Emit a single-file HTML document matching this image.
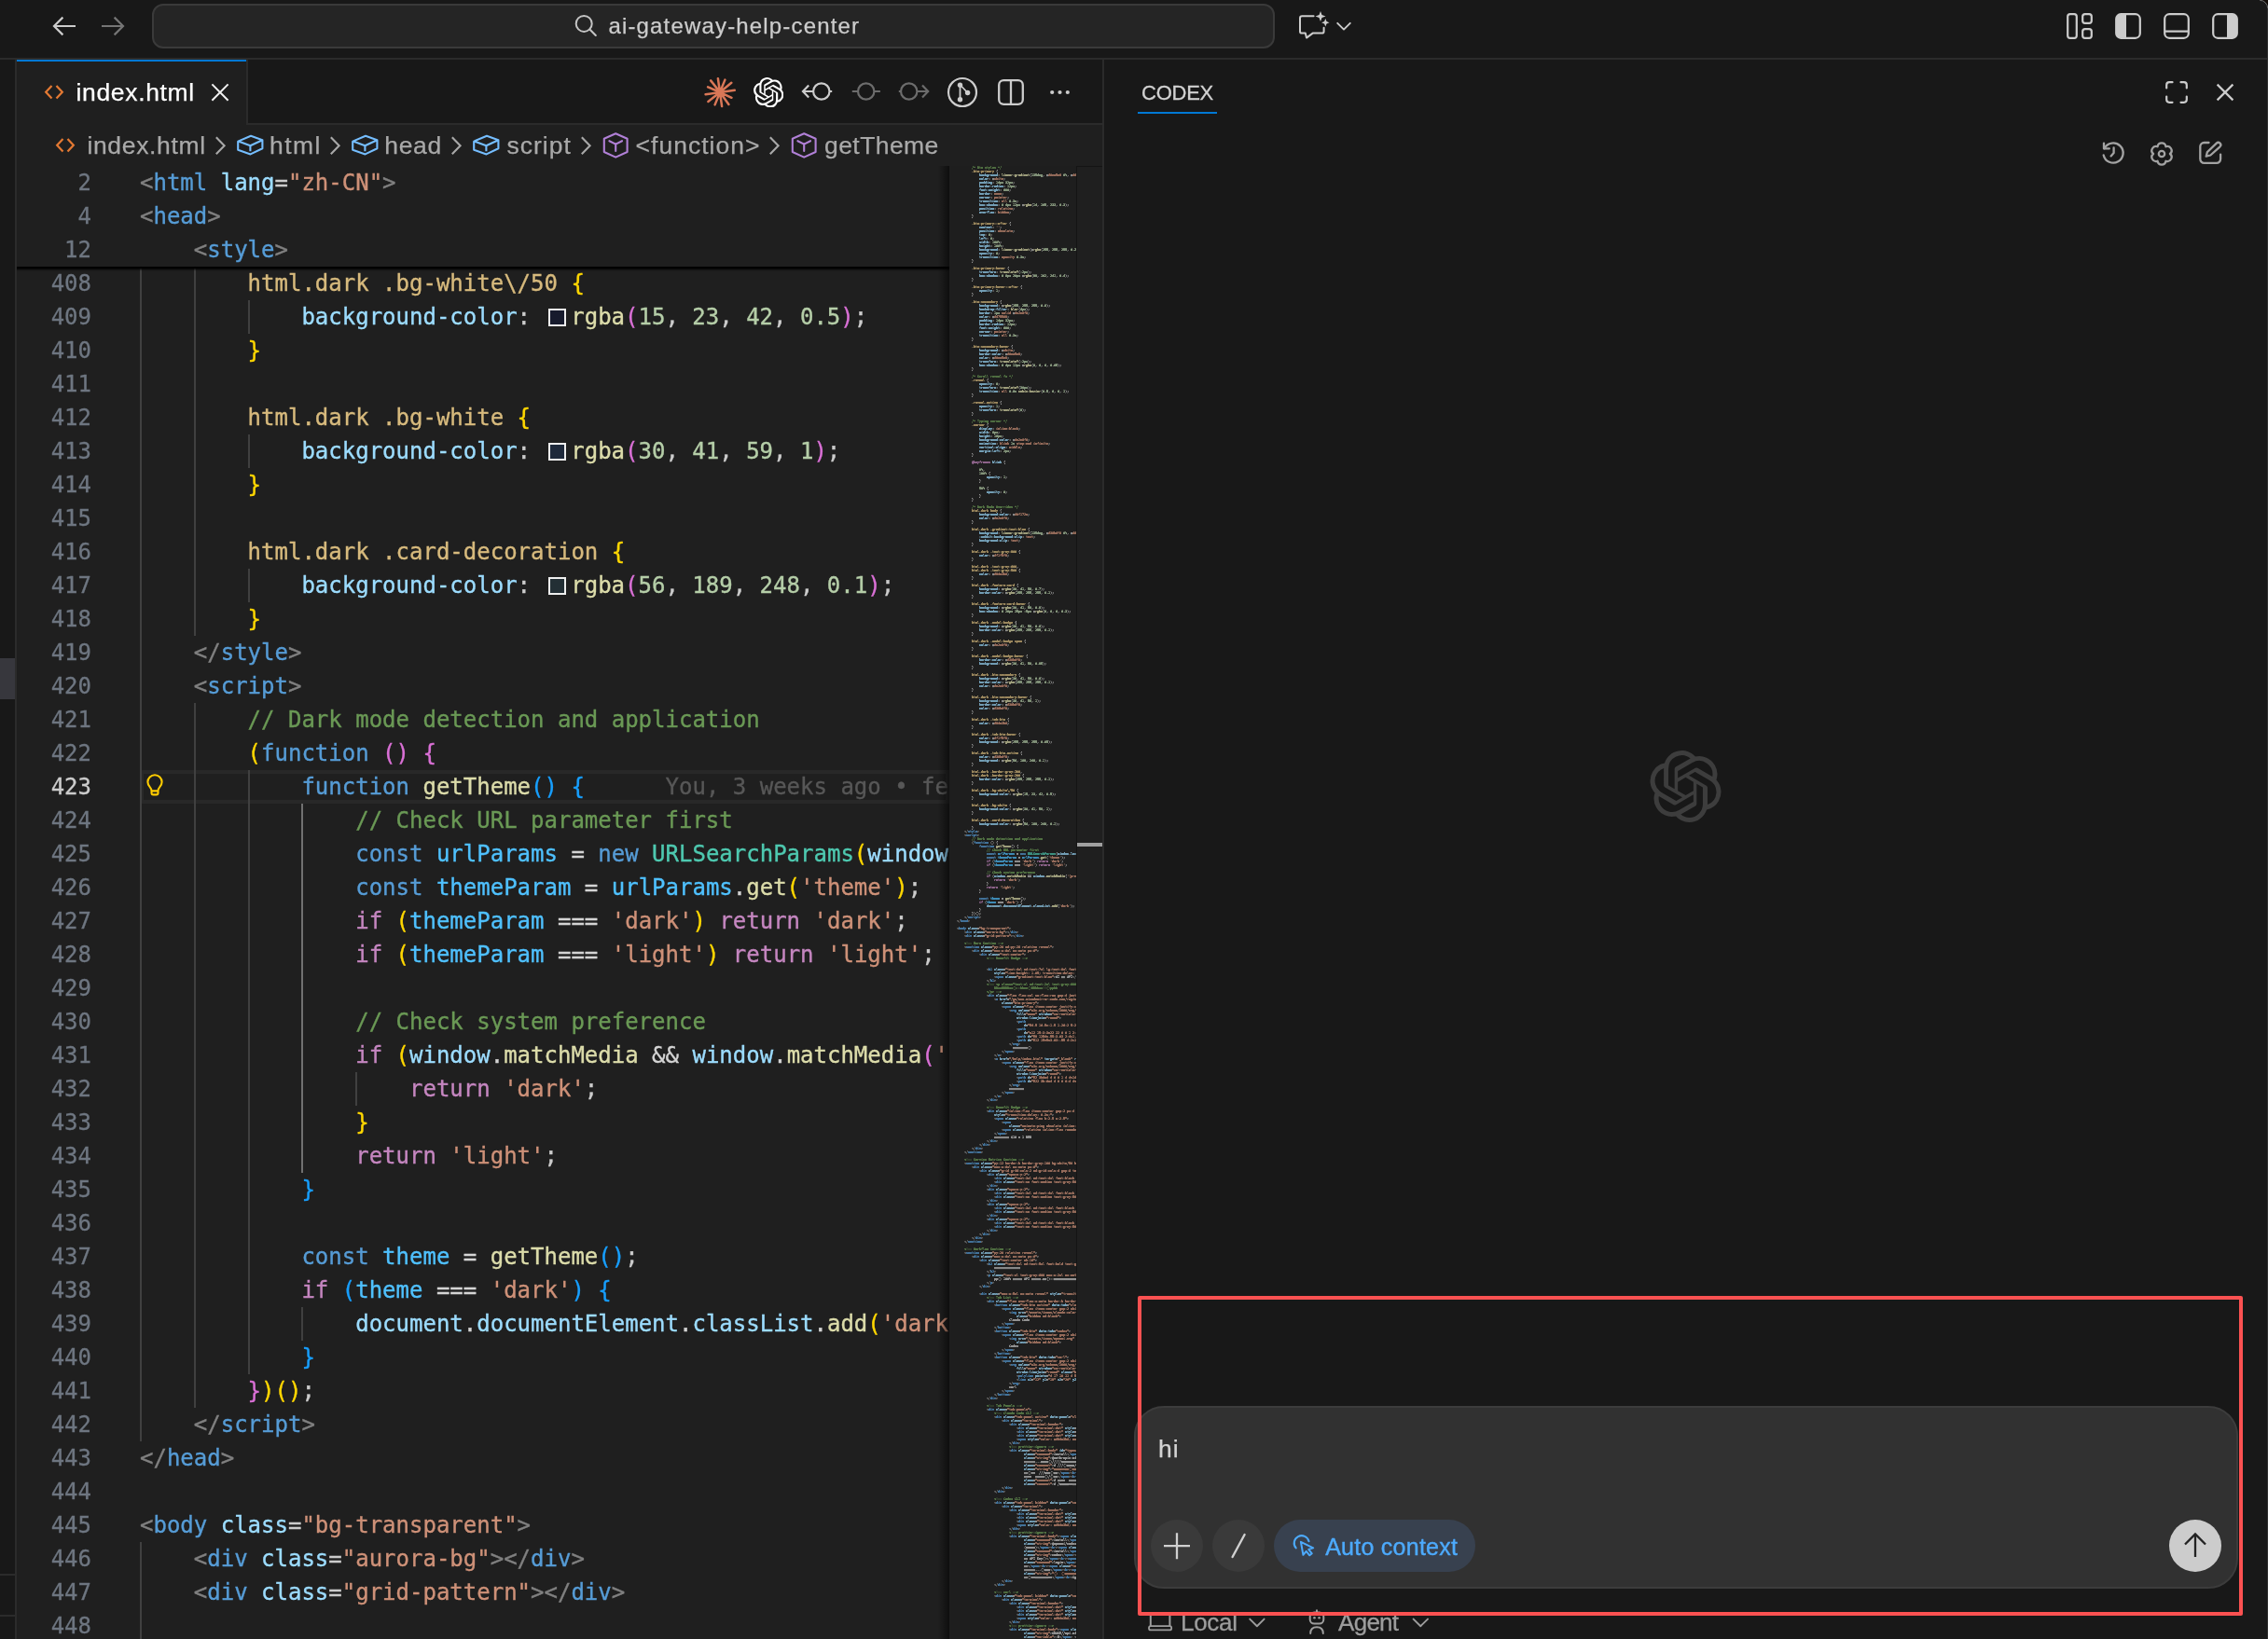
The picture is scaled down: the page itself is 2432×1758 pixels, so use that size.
<!DOCTYPE html>
<html lang="en"><head><meta charset="utf-8"><title>index.html — ai-gateway-help-center</title>
<style>
html,body{margin:0;padding:0;background:#181818;}
body{width:2432px;height:1758px;overflow:hidden;position:relative;font-family:"Liberation Sans",sans-serif;}
#root{left:0;top:0;width:2432px;height:1758px;will-change:transform;}
body div, body svg, body span.tx{position:absolute;}
.tx{white-space:pre;}
#ed .ln{left:0;width:80px;-webkit-text-stroke:0.3px;text-align:right;color:#6e7681;font:24px/36px "DejaVu Sans Mono","Liberation Mono",monospace;height:36px}
#ed .ln.act{color:#cccccc}
#ed .cl{left:132px;color:#cccccc;-webkit-text-stroke:0.35px;font:24px/36px "DejaVu Sans Mono","Liberation Mono",monospace;white-space:pre;height:36px}
.sw{display:inline-block;box-sizing:border-box;width:19.2px;height:19.2px;border:2.4px solid #eeeeee;margin:2.4px 4.8px 0 4.8px;vertical-align:-2px}
#mmi .ml{left:0;font:bold 13.3px/16px "DejaVu Sans Mono","Liberation Mono",monospace;white-space:pre;color:#cccccc;height:16px;opacity:.68;-webkit-text-stroke:1.3px}
.g{color:#808080}
.t{color:#569cd6}
.a{color:#9cdcfe}
.s{color:#ce9178}
.d{color:#cccccc}
.sel{color:#d7ba7d}
.f{color:#dcdcaa}
.n{color:#b5cea8}
.c{color:#6a9955}
.k{color:#c586c0}
.v{color:#4fc1ff}
.cls{color:#4ec9b0}
.b1{color:#ffd700}
.b2{color:#da70d6}
.b3{color:#179fff}
.o{color:#d4d4d4}
.bl{color:#575757}
.at{color:#c586c0}
.swm{color:#bbbbbb}
</style></head>
<body>
<div id="root">
<div style="left:0px;top:0px;width:2432px;height:62px;background:#181818;"></div>
<div style="left:0px;top:62px;width:2432px;height:2px;background:#2b2b2b;"></div>
<div style="left:0px;top:64px;width:16px;height:1694px;background:#181818;"></div>
<div style="left:16px;top:64px;width:2px;height:1694px;background:#2b2b2b;"></div>
<div style="left:0px;top:706px;width:16px;height:44px;background:#37373d;"></div>
<div style="left:0px;top:1688px;width:16px;height:2px;background:#2b2b2b;"></div>
<div style="left:0px;top:1732px;width:16px;height:2px;background:#2b2b2b;"></div>
<div style="left:18px;top:64px;width:1164px;height:70px;background:#181818;"></div>
<div style="left:18px;top:132px;width:1164px;height:2px;background:#2b2b2b;"></div>
<div style="left:18px;top:64px;width:246px;height:70px;background:#1f1f1f;"></div>
<div style="left:18px;top:64px;width:246px;height:2px;background:#0078d4;"></div>
<div style="left:264px;top:64px;width:2px;height:70px;background:#2b2b2b;"></div>
<div style="left:18px;top:134px;width:1164px;height:1624px;background:#1f1f1f;"></div>
<div style="left:1182px;top:64px;width:2px;height:1694px;background:#2b2b2b;"></div>
<div style="left:1184px;top:64px;width:1248px;height:1694px;background:#181818;"></div>
<svg style="left:50px;top:10px;" width="40" height="36" viewBox="50 10 40 36" fill="none"><path d="M81 28H58.4M67.4 18.6L58 28l9.4 9.4" stroke="#cccccc" stroke-width="2.2"/></svg>
<svg style="left:102px;top:10px;" width="40" height="36" viewBox="102 10 40 36" fill="none"><path d="M109 28h22.6M122.6 18.6L132 28l-9.4 9.4" stroke="#757575" stroke-width="2.2"/></svg>
<div style="left:163px;top:4px;width:1204px;height:48px;box-sizing:border-box;border:2px solid #3a3a3a;border-radius:12px;background:#252525"></div>
<svg style="left:612px;top:12px;" width="32" height="32" viewBox="612 12 32 32" fill="none"><circle cx="626.2" cy="25.4" r="8.5" stroke="#c4c4c4" stroke-width="2"/><path d="M632.4 31.6L638.8 38" stroke="#c4c4c4" stroke-width="2.1" stroke-linecap="round"/></svg>
<span class="tx " style="left:652.41px;top:11.60px;font-size:24px;line-height:31px;letter-spacing:1.169px;color:#cccccc;-webkit-text-stroke:0.25px #cccccc;">ai-gateway-help-center</span>
<svg style="left:1388px;top:8px;" width="40" height="40" viewBox="1388 8 40 40" fill="none"><path d="M1408.6 17.2h-12.4a2.2 2.2 0 0 0-2.2 2.2v14a2.2 2.2 0 0 0 2.2 2.2h3.6l1.2 5 6.6-5h9.8a2.2 2.2 0 0 0 2.2-2.2v-3.6" stroke="#cccccc" stroke-width="2" stroke-linejoin="round" stroke-linecap="round"/><path d="M1416 12l1.5 4 4 1.5-4 1.5-1.5 4-1.5-4-4-1.5 4-1.5z" fill="#cccccc"/><path d="M1421.3 20l1.2 3 3 1.2-3 1.2-1.2 3-1.2-3-3-1.2 3-1.2z" fill="#cccccc"/></svg>
<svg style="left:1430px;top:18px;" width="24" height="20" viewBox="1430 18 24 20" fill="none"><path d="M1434.2 24.8l6.8 6.8 6.8-6.8" stroke="#cccccc" stroke-width="1.9" stroke-linecap="round" stroke-linejoin="round"/></svg>
<svg style="left:2214px;top:12px;" width="32" height="32" viewBox="2214 12 32 32" fill="none"><rect x="2217.2" y="15.2" width="9.6" height="25.6" rx="2.6" stroke="#cccccc" stroke-width="2.2"/><rect x="2233.2" y="15.2" width="9.6" height="9.6" rx="2.6" stroke="#cccccc" stroke-width="2.2"/><rect x="2233.2" y="31.2" width="9.6" height="9.6" rx="2.6" stroke="#cccccc" stroke-width="2.2"/></svg>
<svg style="left:2266px;top:12px;" width="32" height="32" viewBox="2266 12 32 32" fill="none"><rect x="2269.2" y="15.2" width="25.6" height="25.6" rx="5" stroke="#cccccc" stroke-width="2.2"/><path d="M2274 15h6v26h-6a5 5 0 0 1-5-5v-16a5 5 0 0 1 5-5z" fill="#cccccc"/></svg>
<svg style="left:2318px;top:12px;" width="32" height="32" viewBox="2318 12 32 32" fill="none"><rect x="2321.2" y="15.2" width="25.6" height="25.6" rx="5" stroke="#cccccc" stroke-width="2.2"/><path d="M2321 33.6h26" stroke="#cccccc" stroke-width="2.2"/></svg>
<svg style="left:2370px;top:12px;" width="32" height="32" viewBox="2370 12 32 32" fill="none"><rect x="2373.2" y="15.2" width="25.6" height="25.6" rx="5" stroke="#cccccc" stroke-width="2.2"/><path d="M2394 15h-6v26h6a5 5 0 0 0 5-5v-16a5 5 0 0 0-5-5z" fill="#cccccc"/></svg>
<svg style="left:45.5px;top:89px;" width="24" height="20" viewBox="45.5 89 24 20" fill="none"><path d="M55.0 92L48.7 98.8l6.3 6.8M60.0 92l6.3 6.8-6.3 6.8" stroke="#e37933" stroke-width="2.25" stroke-linejoin="miter"/></svg>
<span class="tx " style="left:81.55px;top:82.00px;font-size:26.5px;line-height:34px;letter-spacing:0.647px;color:#ffffff;-webkit-text-stroke:0.25px #ffffff;">index.html</span>
<svg style="left:224px;top:86px;" width="26" height="26" viewBox="224 86 26 26" fill="none"><path d="M227.4 90.4l17.2 17.4M244.6 90.4l-17.2 17.4" stroke="#f2f2f2" stroke-width="2"/></svg>
<svg style="left:754px;top:81px;" width="36" height="36" viewBox="754 81 36 36" fill="none"><path d="M774.0 98.7L787.8 96.8M773.8 99.8L784.5 104.8M773.2 100.6L781.4 111.9M772.3 101.0L774.1 114.1M771.3 100.9L766.6 112.4M770.4 100.2L759.4 108.9M770.0 99.3L756.6 101.2M770.2 98.2L759.1 93.3M770.8 97.4L762.1 86.4M771.7 97.0L769.9 84.3M772.7 97.1L777.4 85.6M773.5 97.7L784.3 88.7" stroke="#d97757" stroke-width="2.5" stroke-linecap="round"/><circle cx="772" cy="99" r="3.4" fill="#d97757"/></svg>
<svg style="left:807.75px;top:82.75px" width="32.5" height="32.5" viewBox="0 0 24 24"><path fill="#ffffff" d="M22.2819 9.8211a5.9847 5.9847 0 0 0-.5157-4.9108 6.0462 6.0462 0 0 0-6.5098-2.9A6.0651 6.0651 0 0 0 4.9807 4.1818a5.9847 5.9847 0 0 0-3.9977 2.9 6.0462 6.0462 0 0 0 .7427 7.0966 5.98 5.98 0 0 0 .511 4.9107 6.051 6.051 0 0 0 6.5146 2.9001A5.9847 5.9847 0 0 0 13.2599 24a6.0557 6.0557 0 0 0 5.7718-4.2058 5.9894 5.9894 0 0 0 3.9977-2.9001 6.0557 6.0557 0 0 0-.7475-7.0729zm-9.022 12.6081a4.4755 4.4755 0 0 1-2.8764-1.0408l.1419-.0804 4.7783-2.7582a.7948.7948 0 0 0 .3927-.6813v-6.7369l2.02 1.1686a.071.071 0 0 1 .038.052v5.5826a4.504 4.504 0 0 1-4.4945 4.4944zm-9.6607-4.1254a4.4708 4.4708 0 0 1-.5346-3.0137l.142.0852 4.783 2.7582a.7712.7712 0 0 0 .7806 0l5.8428-3.3685v2.3324a.0804.0804 0 0 1-.0332.0615L9.74 19.9502a4.4992 4.4992 0 0 1-6.1408-1.6464zM2.3408 7.8956a4.485 4.485 0 0 1 2.3655-1.9728V11.6a.7664.7664 0 0 0 .3879.6765l5.8144 3.3543-2.0201 1.1685a.0757.0757 0 0 1-.071 0l-4.8303-2.7865A4.504 4.504 0 0 1 2.3408 7.872zm16.5963 3.8558L13.1038 8.364 15.1192 7.2a.0757.0757 0 0 1 .071 0l4.8303 2.7913a4.4944 4.4944 0 0 1-.6765 8.1042v-5.6772a.79.79 0 0 0-.407-.667zm2.0107-3.0231l-.142-.0852-4.7735-2.7818a.7759.7759 0 0 0-.7854 0L9.409 9.2297V6.8974a.0662.0662 0 0 1 .0284-.0615l4.8303-2.7866a4.4992 4.4992 0 0 1 6.6802 4.66zM8.3065 12.863l-2.02-1.1638a.0804.0804 0 0 1-.038-.0567V6.0742a4.4992 4.4992 0 0 1 7.3757-3.4537l-.142.0805L8.704 5.459a.7948.7948 0 0 0-.3927.6813zm1.0976-2.3654l2.602-1.4998 2.6069 1.4998v2.9994l-2.5974 1.4997-2.6067-1.4997Z"/></svg>
<svg style="left:856px;top:82px;" width="40" height="34" viewBox="856 82 40 34" fill="none"><circle cx="880.8" cy="98" r="8.7" stroke="#cccccc" stroke-width="2.2"/><path d="M872 98h-10.2M867.2 91.6L861 98l6.2 6.4M889.6 98h2.6" stroke="#cccccc" stroke-width="2.2"/></svg>
<svg style="left:910px;top:82px;" width="40" height="34" viewBox="910 82 40 34" fill="none"><circle cx="928.7" cy="98" r="8.7" stroke="#6c6c6c" stroke-width="2.2"/><path d="M920 98h-6.2M937.5 98h6.4" stroke="#6c6c6c" stroke-width="2.2"/></svg>
<svg style="left:960px;top:82px;" width="40" height="34" viewBox="960 82 40 34" fill="none"><circle cx="974.7" cy="98" r="8.7" stroke="#6c6c6c" stroke-width="2.2"/><path d="M983.5 98h11M989 91.5l6.2 6.5-6.2 6.5M966 98h-2.2" stroke="#6c6c6c" stroke-width="2.2"/></svg>
<svg style="left:1014px;top:81px;" width="36" height="36" viewBox="1014 81 36 36" fill="none"><circle cx="1032" cy="99" r="15" stroke="#cccccc" stroke-width="2.2"/><circle cx="1029.5" cy="91.2" r="2.7" fill="#cccccc"/><circle cx="1029.5" cy="106.8" r="2.7" fill="#cccccc"/><circle cx="1037.6" cy="99.5" r="2.7" fill="#cccccc"/><path d="M1029.5 91v16M1030 91.5l7.6 8" stroke="#cccccc" stroke-width="1.8"/></svg>
<svg style="left:1068px;top:83px;" width="32" height="32" viewBox="1068 83 32 32" fill="none"><rect x="1071.2" y="86.2" width="25.6" height="25.6" rx="5" stroke="#cccccc" stroke-width="2.3"/><path d="M1084 86v26" stroke="#cccccc" stroke-width="2.3"/></svg>
<svg style="left:1122px;top:92px;" width="30" height="14" viewBox="1122 92 30 14" fill="none"><circle cx="1128.2" cy="99" r="2.1" fill="#cccccc"/><circle cx="1136.5" cy="99" r="2.1" fill="#cccccc"/><circle cx="1144.8" cy="99" r="2.1" fill="#cccccc"/></svg>
<svg style="left:57.5px;top:145.5px;" width="24" height="20" viewBox="57.5 145.5 24 20" fill="none"><path d="M67.0 148.5L60.7 155.3l6.3 6.8M72.0 148.5l6.3 6.8-6.3 6.8" stroke="#e37933" stroke-width="2.25" stroke-linejoin="miter"/></svg>
<span class="tx " style="left:93.45px;top:138.80px;font-size:26.5px;line-height:34px;letter-spacing:0.647px;color:#a9a9a9;-webkit-text-stroke:0.25px #a9a9a9;">index.html</span>
<svg style="left:229px;top:144px;" width="16" height="24" viewBox="229 144 16 24" fill="none"><path d="M231.8 147.2l8.8 9-8.8 9" stroke="#a9a9a9" stroke-width="2.1" stroke-linejoin="miter"/></svg>
<svg style="left:252.7px;top:143px;" width="32" height="26" viewBox="252.7 143 32 26" fill="none"><path d="M268.7 145.8l12.4 4.4v9l-12.8 6.2-13.4-4.6v-9.2z M255.29999999999998 151.6l12.8 4.6 13-6 M268.09999999999997 156.2v6" stroke="#75beff" stroke-width="2.1" stroke-linejoin="round"/></svg>
<span class="tx " style="left:289.09px;top:138.80px;font-size:26.5px;line-height:34px;letter-spacing:1.399px;color:#a9a9a9;-webkit-text-stroke:0.25px #a9a9a9;">html</span>
<svg style="left:352px;top:144px;" width="16" height="24" viewBox="352 144 16 24" fill="none"><path d="M354.8 147.2l8.8 9-8.8 9" stroke="#a9a9a9" stroke-width="2.1" stroke-linejoin="miter"/></svg>
<svg style="left:375.7px;top:143px;" width="32" height="26" viewBox="375.7 143 32 26" fill="none"><path d="M391.7 145.8l12.4 4.4v9l-12.8 6.2-13.4-4.6v-9.2z M378.3 151.6l12.8 4.6 13-6 M391.09999999999997 156.2v6" stroke="#75beff" stroke-width="2.1" stroke-linejoin="round"/></svg>
<span class="tx " style="left:412.29px;top:138.80px;font-size:26.5px;line-height:34px;letter-spacing:0.681px;color:#a9a9a9;-webkit-text-stroke:0.25px #a9a9a9;">head</span>
<svg style="left:482px;top:144px;" width="16" height="24" viewBox="482 144 16 24" fill="none"><path d="M484.8 147.2l8.8 9-8.8 9" stroke="#a9a9a9" stroke-width="2.1" stroke-linejoin="miter"/></svg>
<svg style="left:505.7px;top:143px;" width="32" height="26" viewBox="505.7 143 32 26" fill="none"><path d="M521.7 145.8l12.4 4.4v9l-12.8 6.2-13.4-4.6v-9.2z M508.3 151.6l12.8 4.6 13-6 M521.1 156.2v6" stroke="#75beff" stroke-width="2.1" stroke-linejoin="round"/></svg>
<span class="tx " style="left:543.39px;top:138.80px;font-size:26.5px;line-height:34px;letter-spacing:1.014px;color:#a9a9a9;-webkit-text-stroke:0.25px #a9a9a9;">script</span>
<svg style="left:621px;top:144px;" width="16" height="24" viewBox="621 144 16 24" fill="none"><path d="M623.8 147.2l8.8 9-8.8 9" stroke="#a9a9a9" stroke-width="2.1" stroke-linejoin="miter"/></svg>
<svg style="left:644.5px;top:140px;" width="32" height="32" viewBox="644.5 140 32 32" fill="none"><path d="M659.7 143.2l12.4 5.6v14.2l-12.4 5.6-12.4-5.6v-14.2z" stroke="#b180d7" stroke-width="2.1" stroke-linejoin="round"/><path d="M652.9 151.2l6.8 3.4 6.8-3.4M659.7 154.6v7.4" stroke="#b180d7" stroke-width="2.1" stroke-linecap="round"/></svg>
<span class="tx " style="left:681.62px;top:138.80px;font-size:26.5px;line-height:34px;letter-spacing:1.009px;color:#a9a9a9;-webkit-text-stroke:0.25px #a9a9a9;">&lt;function&gt;</span>
<svg style="left:823px;top:144px;" width="16" height="24" viewBox="823 144 16 24" fill="none"><path d="M825.8 147.2l8.8 9-8.8 9" stroke="#a9a9a9" stroke-width="2.1" stroke-linejoin="miter"/></svg>
<svg style="left:847px;top:140px;" width="32" height="32" viewBox="847 140 32 32" fill="none"><path d="M862.2 143.2l12.4 5.6v14.2l-12.4 5.6-12.4-5.6v-14.2z" stroke="#b180d7" stroke-width="2.1" stroke-linejoin="round"/><path d="M855.4 151.2l6.8 3.4 6.8-3.4M862.2 154.6v7.4" stroke="#b180d7" stroke-width="2.1" stroke-linecap="round"/></svg>
<span class="tx " style="left:884.01px;top:138.80px;font-size:26.5px;line-height:34px;letter-spacing:0.432px;color:#a9a9a9;-webkit-text-stroke:0.25px #a9a9a9;">getTheme</span>
<div id="ed" style="left:18px;top:178px;width:1000px;height:1580px;overflow:hidden">
<div style="left:132px;top:648px;width:868px;height:36px;box-sizing:border-box;border:4px solid #282828"></div>
<div style="left:132.00px;top:108px;width:2px;height:36px;background:#404040"></div>
<div style="left:189.80px;top:108px;width:2px;height:36px;background:#404040"></div>
<div style="left:132.00px;top:144px;width:2px;height:36px;background:#404040"></div>
<div style="left:189.80px;top:144px;width:2px;height:36px;background:#404040"></div>
<div style="left:247.59px;top:144px;width:2px;height:36px;background:#404040"></div>
<div style="left:132.00px;top:180px;width:2px;height:36px;background:#404040"></div>
<div style="left:189.80px;top:180px;width:2px;height:36px;background:#404040"></div>
<div style="left:132.00px;top:216px;width:2px;height:36px;background:#404040"></div>
<div style="left:189.80px;top:216px;width:2px;height:36px;background:#404040"></div>
<div style="left:132.00px;top:252px;width:2px;height:36px;background:#404040"></div>
<div style="left:189.80px;top:252px;width:2px;height:36px;background:#404040"></div>
<div style="left:132.00px;top:288px;width:2px;height:36px;background:#404040"></div>
<div style="left:189.80px;top:288px;width:2px;height:36px;background:#404040"></div>
<div style="left:247.59px;top:288px;width:2px;height:36px;background:#404040"></div>
<div style="left:132.00px;top:324px;width:2px;height:36px;background:#404040"></div>
<div style="left:189.80px;top:324px;width:2px;height:36px;background:#404040"></div>
<div style="left:132.00px;top:360px;width:2px;height:36px;background:#404040"></div>
<div style="left:189.80px;top:360px;width:2px;height:36px;background:#404040"></div>
<div style="left:132.00px;top:396px;width:2px;height:36px;background:#404040"></div>
<div style="left:189.80px;top:396px;width:2px;height:36px;background:#404040"></div>
<div style="left:132.00px;top:432px;width:2px;height:36px;background:#404040"></div>
<div style="left:189.80px;top:432px;width:2px;height:36px;background:#404040"></div>
<div style="left:247.59px;top:432px;width:2px;height:36px;background:#404040"></div>
<div style="left:132.00px;top:468px;width:2px;height:36px;background:#404040"></div>
<div style="left:189.80px;top:468px;width:2px;height:36px;background:#404040"></div>
<div style="left:132.00px;top:504px;width:2px;height:36px;background:#404040"></div>
<div style="left:132.00px;top:540px;width:2px;height:36px;background:#404040"></div>
<div style="left:132.00px;top:576px;width:2px;height:36px;background:#404040"></div>
<div style="left:189.80px;top:576px;width:2px;height:36px;background:#404040"></div>
<div style="left:132.00px;top:612px;width:2px;height:36px;background:#404040"></div>
<div style="left:189.80px;top:612px;width:2px;height:36px;background:#404040"></div>
<div style="left:132.00px;top:648px;width:2px;height:36px;background:#404040"></div>
<div style="left:189.80px;top:648px;width:2px;height:36px;background:#404040"></div>
<div style="left:247.59px;top:648px;width:2px;height:36px;background:#404040"></div>
<div style="left:132.00px;top:684px;width:2px;height:36px;background:#404040"></div>
<div style="left:189.80px;top:684px;width:2px;height:36px;background:#404040"></div>
<div style="left:247.59px;top:684px;width:2px;height:36px;background:#404040"></div>
<div style="left:305.39px;top:684px;width:2px;height:36px;background:#707070"></div>
<div style="left:132.00px;top:720px;width:2px;height:36px;background:#404040"></div>
<div style="left:189.80px;top:720px;width:2px;height:36px;background:#404040"></div>
<div style="left:247.59px;top:720px;width:2px;height:36px;background:#404040"></div>
<div style="left:305.39px;top:720px;width:2px;height:36px;background:#707070"></div>
<div style="left:132.00px;top:756px;width:2px;height:36px;background:#404040"></div>
<div style="left:189.80px;top:756px;width:2px;height:36px;background:#404040"></div>
<div style="left:247.59px;top:756px;width:2px;height:36px;background:#404040"></div>
<div style="left:305.39px;top:756px;width:2px;height:36px;background:#707070"></div>
<div style="left:132.00px;top:792px;width:2px;height:36px;background:#404040"></div>
<div style="left:189.80px;top:792px;width:2px;height:36px;background:#404040"></div>
<div style="left:247.59px;top:792px;width:2px;height:36px;background:#404040"></div>
<div style="left:305.39px;top:792px;width:2px;height:36px;background:#707070"></div>
<div style="left:132.00px;top:828px;width:2px;height:36px;background:#404040"></div>
<div style="left:189.80px;top:828px;width:2px;height:36px;background:#404040"></div>
<div style="left:247.59px;top:828px;width:2px;height:36px;background:#404040"></div>
<div style="left:305.39px;top:828px;width:2px;height:36px;background:#707070"></div>
<div style="left:132.00px;top:864px;width:2px;height:36px;background:#404040"></div>
<div style="left:189.80px;top:864px;width:2px;height:36px;background:#404040"></div>
<div style="left:247.59px;top:864px;width:2px;height:36px;background:#404040"></div>
<div style="left:305.39px;top:864px;width:2px;height:36px;background:#707070"></div>
<div style="left:132.00px;top:900px;width:2px;height:36px;background:#404040"></div>
<div style="left:189.80px;top:900px;width:2px;height:36px;background:#404040"></div>
<div style="left:247.59px;top:900px;width:2px;height:36px;background:#404040"></div>
<div style="left:305.39px;top:900px;width:2px;height:36px;background:#707070"></div>
<div style="left:132.00px;top:936px;width:2px;height:36px;background:#404040"></div>
<div style="left:189.80px;top:936px;width:2px;height:36px;background:#404040"></div>
<div style="left:247.59px;top:936px;width:2px;height:36px;background:#404040"></div>
<div style="left:305.39px;top:936px;width:2px;height:36px;background:#707070"></div>
<div style="left:132.00px;top:972px;width:2px;height:36px;background:#404040"></div>
<div style="left:189.80px;top:972px;width:2px;height:36px;background:#404040"></div>
<div style="left:247.59px;top:972px;width:2px;height:36px;background:#404040"></div>
<div style="left:305.39px;top:972px;width:2px;height:36px;background:#707070"></div>
<div style="left:363.18px;top:972px;width:2px;height:36px;background:#404040"></div>
<div style="left:132.00px;top:1008px;width:2px;height:36px;background:#404040"></div>
<div style="left:189.80px;top:1008px;width:2px;height:36px;background:#404040"></div>
<div style="left:247.59px;top:1008px;width:2px;height:36px;background:#404040"></div>
<div style="left:305.39px;top:1008px;width:2px;height:36px;background:#707070"></div>
<div style="left:132.00px;top:1044px;width:2px;height:36px;background:#404040"></div>
<div style="left:189.80px;top:1044px;width:2px;height:36px;background:#404040"></div>
<div style="left:247.59px;top:1044px;width:2px;height:36px;background:#404040"></div>
<div style="left:305.39px;top:1044px;width:2px;height:36px;background:#707070"></div>
<div style="left:132.00px;top:1080px;width:2px;height:36px;background:#404040"></div>
<div style="left:189.80px;top:1080px;width:2px;height:36px;background:#404040"></div>
<div style="left:247.59px;top:1080px;width:2px;height:36px;background:#404040"></div>
<div style="left:132.00px;top:1116px;width:2px;height:36px;background:#404040"></div>
<div style="left:189.80px;top:1116px;width:2px;height:36px;background:#404040"></div>
<div style="left:247.59px;top:1116px;width:2px;height:36px;background:#404040"></div>
<div style="left:132.00px;top:1152px;width:2px;height:36px;background:#404040"></div>
<div style="left:189.80px;top:1152px;width:2px;height:36px;background:#404040"></div>
<div style="left:247.59px;top:1152px;width:2px;height:36px;background:#404040"></div>
<div style="left:132.00px;top:1188px;width:2px;height:36px;background:#404040"></div>
<div style="left:189.80px;top:1188px;width:2px;height:36px;background:#404040"></div>
<div style="left:247.59px;top:1188px;width:2px;height:36px;background:#404040"></div>
<div style="left:132.00px;top:1224px;width:2px;height:36px;background:#404040"></div>
<div style="left:189.80px;top:1224px;width:2px;height:36px;background:#404040"></div>
<div style="left:247.59px;top:1224px;width:2px;height:36px;background:#404040"></div>
<div style="left:305.39px;top:1224px;width:2px;height:36px;background:#404040"></div>
<div style="left:132.00px;top:1260px;width:2px;height:36px;background:#404040"></div>
<div style="left:189.80px;top:1260px;width:2px;height:36px;background:#404040"></div>
<div style="left:247.59px;top:1260px;width:2px;height:36px;background:#404040"></div>
<div style="left:132.00px;top:1296px;width:2px;height:36px;background:#404040"></div>
<div style="left:189.80px;top:1296px;width:2px;height:36px;background:#404040"></div>
<div style="left:132.00px;top:1332px;width:2px;height:36px;background:#404040"></div>
<div style="left:132.00px;top:1476px;width:2px;height:36px;background:#404040"></div>
<div style="left:132.00px;top:1512px;width:2px;height:36px;background:#404040"></div>
<div style="left:132.00px;top:1548px;width:2px;height:36px;background:#404040"></div>
<div class="ln" style="top:108px">408</div>
<div class="cl" style="top:108px">        <span class="sel">html.dark .bg-white\/50</span> <span class="b1">{</span></div>
<div class="ln" style="top:144px">409</div>
<div class="cl" style="top:144px">            <span class="a">background-color</span>: <i class="sw" style="background:#171b2d"></i><span class="f">rgba</span><span class="b2">(</span><span class="n">15</span>, <span class="n">23</span>, <span class="n">42</span>, <span class="n">0.5</span><span class="b2">)</span>;</div>
<div class="ln" style="top:180px">410</div>
<div class="cl" style="top:180px">        <span class="b1">}</span></div>
<div class="ln" style="top:216px">411</div>
<div class="ln" style="top:252px">412</div>
<div class="cl" style="top:252px">        <span class="sel">html.dark .bg-white</span> <span class="b1">{</span></div>
<div class="ln" style="top:288px">413</div>
<div class="cl" style="top:288px">            <span class="a">background-color</span>: <i class="sw" style="background:#1e293b"></i><span class="f">rgba</span><span class="b2">(</span><span class="n">30</span>, <span class="n">41</span>, <span class="n">59</span>, <span class="n">1</span><span class="b2">)</span>;</div>
<div class="ln" style="top:324px">414</div>
<div class="cl" style="top:324px">        <span class="b1">}</span></div>
<div class="ln" style="top:360px">415</div>
<div class="ln" style="top:396px">416</div>
<div class="cl" style="top:396px">        <span class="sel">html.dark .card-decoration</span> <span class="b1">{</span></div>
<div class="ln" style="top:432px">417</div>
<div class="cl" style="top:432px">            <span class="a">background-color</span>: <i class="sw" style="background:#232f35"></i><span class="f">rgba</span><span class="b2">(</span><span class="n">56</span>, <span class="n">189</span>, <span class="n">248</span>, <span class="n">0.1</span><span class="b2">)</span>;</div>
<div class="ln" style="top:468px">418</div>
<div class="cl" style="top:468px">        <span class="b1">}</span></div>
<div class="ln" style="top:504px">419</div>
<div class="cl" style="top:504px">    <span class="g">&lt;/</span><span class="t">style</span><span class="g">&gt;</span></div>
<div class="ln" style="top:540px">420</div>
<div class="cl" style="top:540px">    <span class="g">&lt;</span><span class="t">script</span><span class="g">&gt;</span></div>
<div class="ln" style="top:576px">421</div>
<div class="cl" style="top:576px">        <span class="c">// Dark mode detection and application</span></div>
<div class="ln" style="top:612px">422</div>
<div class="cl" style="top:612px">        <span class="b1">(</span><span class="t">function</span> <span class="b2">()</span> <span class="b2">{</span></div>
<div class="ln act" style="top:648px">423</div>
<div class="cl" style="top:648px">            <span class="t">function</span> <span class="f">getTheme</span><span class="b3">()</span> <span class="b3">{</span>      <span class="bl">You, 3 weeks ago • feat: add dark mode support</span></div>
<div class="ln" style="top:684px">424</div>
<div class="cl" style="top:684px">                <span class="c">// Check URL parameter first</span></div>
<div class="ln" style="top:720px">425</div>
<div class="cl" style="top:720px">                <span class="t">const</span> <span class="v">urlParams</span> <span class="o">=</span> <span class="t">new</span> <span class="cls">URLSearchParams</span><span class="b1">(</span><span class="a">window</span><span class="o">.</span><span class="a">location</span><span class="o">.</span><span class="a">search</span><span class="b1">)</span>;</div>
<div class="ln" style="top:756px">426</div>
<div class="cl" style="top:756px">                <span class="t">const</span> <span class="v">themeParam</span> <span class="o">=</span> <span class="v">urlParams</span><span class="o">.</span><span class="f">get</span><span class="b1">(</span><span class="s">'theme'</span><span class="b1">)</span>;</div>
<div class="ln" style="top:792px">427</div>
<div class="cl" style="top:792px">                <span class="k">if</span> <span class="b1">(</span><span class="v">themeParam</span> <span class="o">===</span> <span class="s">'dark'</span><span class="b1">)</span> <span class="k">return</span> <span class="s">'dark'</span>;</div>
<div class="ln" style="top:828px">428</div>
<div class="cl" style="top:828px">                <span class="k">if</span> <span class="b1">(</span><span class="v">themeParam</span> <span class="o">===</span> <span class="s">'light'</span><span class="b1">)</span> <span class="k">return</span> <span class="s">'light'</span>;</div>
<div class="ln" style="top:864px">429</div>
<div class="ln" style="top:900px">430</div>
<div class="cl" style="top:900px">                <span class="c">// Check system preference</span></div>
<div class="ln" style="top:936px">431</div>
<div class="cl" style="top:936px">                <span class="k">if</span> <span class="b1">(</span><span class="a">window</span><span class="o">.</span><span class="f">matchMedia</span> <span class="o">&amp;&amp;</span> <span class="a">window</span><span class="o">.</span><span class="f">matchMedia</span><span class="b2">(</span><span class="s">'(prefers-color-scheme: dark)'</span><span class="b2">)</span><span class="o">.</span><span class="a">matches</span><span class="b1">)</span> <span class="b1">{</span></div>
<div class="ln" style="top:972px">432</div>
<div class="cl" style="top:972px">                    <span class="k">return</span> <span class="s">'dark'</span>;</div>
<div class="ln" style="top:1008px">433</div>
<div class="cl" style="top:1008px">                <span class="b1">}</span></div>
<div class="ln" style="top:1044px">434</div>
<div class="cl" style="top:1044px">                <span class="k">return</span> <span class="s">'light'</span>;</div>
<div class="ln" style="top:1080px">435</div>
<div class="cl" style="top:1080px">            <span class="b3">}</span></div>
<div class="ln" style="top:1116px">436</div>
<div class="ln" style="top:1152px">437</div>
<div class="cl" style="top:1152px">            <span class="t">const</span> <span class="v">theme</span> <span class="o">=</span> <span class="f">getTheme</span><span class="b3">()</span>;</div>
<div class="ln" style="top:1188px">438</div>
<div class="cl" style="top:1188px">            <span class="k">if</span> <span class="b3">(</span><span class="v">theme</span> <span class="o">===</span> <span class="s">'dark'</span><span class="b3">)</span> <span class="b3">{</span></div>
<div class="ln" style="top:1224px">439</div>
<div class="cl" style="top:1224px">                <span class="a">document</span><span class="o">.</span><span class="a">documentElement</span><span class="o">.</span><span class="a">classList</span><span class="o">.</span><span class="f">add</span><span class="b1">(</span><span class="s">'dark'</span><span class="b1">)</span>;</div>
<div class="ln" style="top:1260px">440</div>
<div class="cl" style="top:1260px">            <span class="b3">}</span></div>
<div class="ln" style="top:1296px">441</div>
<div class="cl" style="top:1296px">        <span class="b2">}</span><span class="b1">)</span><span class="b1">()</span>;</div>
<div class="ln" style="top:1332px">442</div>
<div class="cl" style="top:1332px">    <span class="g">&lt;/</span><span class="t">script</span><span class="g">&gt;</span></div>
<div class="ln" style="top:1368px">443</div>
<div class="cl" style="top:1368px"><span class="g">&lt;/</span><span class="t">head</span><span class="g">&gt;</span></div>
<div class="ln" style="top:1404px">444</div>
<div class="ln" style="top:1440px">445</div>
<div class="cl" style="top:1440px"><span class="g">&lt;</span><span class="t">body</span> <span class="a">class</span>=<span class="s">"bg-transparent"</span><span class="g">&gt;</span></div>
<div class="ln" style="top:1476px">446</div>
<div class="cl" style="top:1476px">    <span class="g">&lt;</span><span class="t">div</span> <span class="a">class</span>=<span class="s">"aurora-bg"</span><span class="g">&gt;&lt;/</span><span class="t">div</span><span class="g">&gt;</span></div>
<div class="ln" style="top:1512px">447</div>
<div class="cl" style="top:1512px">    <span class="g">&lt;</span><span class="t">div</span> <span class="a">class</span>=<span class="s">"grid-pattern"</span><span class="g">&gt;&lt;/</span><span class="t">div</span><span class="g">&gt;</span></div>
<div class="ln" style="top:1548px">448</div>
<svg style="left:137px;top:650px;" width="22" height="28" viewBox="155 828 22 28" fill="none"><path d="M166 831.2a7.6 7.6 0 0 0-7.6 7.6c0 2.6 1.2 4.3 2.6 5.8 1 1.1 1.5 2.1 1.5 3.6v2.2a2 2 0 0 0 2 2h3a2 2 0 0 0 2-2v-2.2c0-1.5.5-2.5 1.5-3.6 1.4-1.5 2.6-3.2 2.6-5.8a7.6 7.6 0 0 0-7.6-7.6zM162.6 848.4h6.8" stroke="#ffcc00" stroke-width="2.1" stroke-linejoin="round"/></svg>
<div style="left:-10px;top:0;width:1020px;height:108px;background:#1f1f1f;box-shadow:0 4px 2px -1px #000"></div>
<div class="ln" style="top:0px">2</div>
<div class="cl" style="top:0px"><span class="g">&lt;</span><span class="t">html</span> <span class="a">lang</span>=<span class="s">"zh-CN"</span><span class="g">&gt;</span></div>
<div class="ln" style="top:36px">4</div>
<div class="cl" style="top:36px"><span class="g">&lt;</span><span class="t">head</span><span class="g">&gt;</span></div>
<div class="ln" style="top:72px">12</div>
<div class="cl" style="top:72px">    <span class="g">&lt;</span><span class="t">style</span><span class="g">&gt;</span></div>
</div>
<div style="left:1006px;top:178px;width:12px;height:1580px;background:linear-gradient(to right, rgba(0,0,0,0), rgba(0,0,0,0.55))"></div>
<div style="left:1018px;top:178px;width:136px;height:1580px;background:#1e1e1e;"></div>
<div id="mm" style="left:1018px;top:178px;width:136px;height:1580px;overflow:hidden"><div id="mmi" style="left:7.8px;top:-0.2px;transform:scale(0.25);transform-origin:0 0">
<div class="ml" style="top:0px">        <span class="c">/* Btn styles */</span></div>
<div class="ml" style="top:16px">        <span class="sel">.btn-primary</span> {</div>
<div class="ml" style="top:32px">            <span class="a">background</span>: <span class="f">linear-gradient</span>(<span class="n">135deg</span>, <span class="swm">■</span><span class="s">#0ea5e9</span> <span class="n">0%</span>, <span class="swm">■</span><span class="s">#6366f1</span> <span class="n">100%</span>);</div>
<div class="ml" style="top:48px">            <span class="a">color</span>: <span class="swm">■</span><span class="s">white</span>;</div>
<div class="ml" style="top:64px">            <span class="a">padding</span>: <span class="n">14px</span> <span class="n">32px</span>;</div>
<div class="ml" style="top:80px">            <span class="a">border-radius</span>: <span class="n">12px</span>;</div>
<div class="ml" style="top:96px">            <span class="a">font-weight</span>: <span class="n">600</span>;</div>
<div class="ml" style="top:112px">            <span class="a">border</span>: <span class="s">none</span>;</div>
<div class="ml" style="top:128px">            <span class="a">cursor</span>: <span class="s">pointer</span>;</div>
<div class="ml" style="top:144px">            <span class="a">transition</span>: <span class="s">all</span> <span class="n">0.3s</span>;</div>
<div class="ml" style="top:160px">            <span class="a">box-shadow</span>: <span class="n">0</span> <span class="n">4px</span> <span class="n">12px</span> <span class="swm">■</span><span class="f">rgba</span>(<span class="n">14</span>, <span class="n">165</span>, <span class="n">233</span>, <span class="n">0.3</span>);</div>
<div class="ml" style="top:176px">            <span class="a">position</span>: <span class="s">relative</span>;</div>
<div class="ml" style="top:192px">            <span class="a">overflow</span>: <span class="s">hidden</span>;</div>
<div class="ml" style="top:208px">        }</div>
<div class="ml" style="top:240px">        <span class="sel">.btn-primary::after</span> {</div>
<div class="ml" style="top:256px">            <span class="a">content</span>: <span class="s">''</span>;</div>
<div class="ml" style="top:272px">            <span class="a">position</span>: <span class="s">absolute</span>;</div>
<div class="ml" style="top:288px">            <span class="a">top</span>: <span class="n">0</span>;</div>
<div class="ml" style="top:304px">            <span class="a">left</span>: <span class="n">0</span>;</div>
<div class="ml" style="top:320px">            <span class="a">width</span>: <span class="n">100%</span>;</div>
<div class="ml" style="top:336px">            <span class="a">height</span>: <span class="n">100%</span>;</div>
<div class="ml" style="top:352px">            <span class="a">background</span>: <span class="f">linear-gradient</span>(<span class="swm">■</span><span class="f">rgba</span>(<span class="n">255</span>, <span class="n">255</span>, <span class="n">255</span>, <span class="n">0.2</span>), <span class="s">transparent</span>);</div>
<div class="ml" style="top:368px">            <span class="a">opacity</span>: <span class="n">0</span>;</div>
<div class="ml" style="top:384px">            <span class="a">transition</span>: <span class="s">opacity</span> <span class="n">0.3s</span>;</div>
<div class="ml" style="top:400px">        }</div>
<div class="ml" style="top:432px">        <span class="sel">.btn-primary:hover</span> {</div>
<div class="ml" style="top:448px">            <span class="a">transform</span>: <span class="f">translateY</span>(<span class="n">-2px</span>);</div>
<div class="ml" style="top:464px">            <span class="a">box-shadow</span>: <span class="n">0</span> <span class="n">8px</span> <span class="n">20px</span> <span class="swm">■</span><span class="f">rgba</span>(<span class="n">99</span>, <span class="n">102</span>, <span class="n">241</span>, <span class="n">0.4</span>);</div>
<div class="ml" style="top:480px">        }</div>
<div class="ml" style="top:512px">        <span class="sel">.btn-primary:hover::after</span> {</div>
<div class="ml" style="top:528px">            <span class="a">opacity</span>: <span class="n">1</span>;</div>
<div class="ml" style="top:544px">        }</div>
<div class="ml" style="top:576px">        <span class="sel">.btn-secondary</span> {</div>
<div class="ml" style="top:592px">            <span class="a">background</span>: <span class="swm">■</span><span class="f">rgba</span>(<span class="n">255</span>, <span class="n">255</span>, <span class="n">255</span>, <span class="n">0.8</span>);</div>
<div class="ml" style="top:608px">            <span class="a">backdrop-filter</span>: <span class="f">blur</span>(<span class="n">4px</span>);</div>
<div class="ml" style="top:624px">            <span class="a">border</span>: <span class="n">1px</span> <span class="s">solid</span> <span class="swm">■</span><span class="s">#e2e8f0</span>;</div>
<div class="ml" style="top:640px">            <span class="a">color</span>: <span class="swm">■</span><span class="s">#475569</span>;</div>
<div class="ml" style="top:656px">            <span class="a">padding</span>: <span class="n">14px</span> <span class="n">32px</span>;</div>
<div class="ml" style="top:672px">            <span class="a">border-radius</span>: <span class="n">12px</span>;</div>
<div class="ml" style="top:688px">            <span class="a">font-weight</span>: <span class="n">600</span>;</div>
<div class="ml" style="top:704px">            <span class="a">cursor</span>: <span class="s">pointer</span>;</div>
<div class="ml" style="top:720px">            <span class="a">transition</span>: <span class="s">all</span> <span class="n">0.3s</span>;</div>
<div class="ml" style="top:736px">        }</div>
<div class="ml" style="top:768px">        <span class="sel">.btn-secondary:hover</span> {</div>
<div class="ml" style="top:784px">            <span class="a">background</span>: <span class="swm">■</span><span class="s">white</span>;</div>
<div class="ml" style="top:800px">            <span class="a">border-color</span>: <span class="swm">■</span><span class="s">#0ea5e9</span>;</div>
<div class="ml" style="top:816px">            <span class="a">color</span>: <span class="swm">■</span><span class="s">#0ea5e9</span>;</div>
<div class="ml" style="top:832px">            <span class="a">transform</span>: <span class="f">translateY</span>(<span class="n">-2px</span>);</div>
<div class="ml" style="top:848px">            <span class="a">box-shadow</span>: <span class="n">0</span> <span class="n">4px</span> <span class="n">12px</span> <span class="swm">■</span><span class="f">rgba</span>(<span class="n">0</span>, <span class="n">0</span>, <span class="n">0</span>, <span class="n">0.05</span>);</div>
<div class="ml" style="top:864px">        }</div>
<div class="ml" style="top:896px">        <span class="c">/* Scroll reveal fx */</span></div>
<div class="ml" style="top:912px">        <span class="sel">.reveal</span> {</div>
<div class="ml" style="top:928px">            <span class="a">opacity</span>: <span class="n">0</span>;</div>
<div class="ml" style="top:944px">            <span class="a">transform</span>: <span class="f">translateY</span>(<span class="n">30px</span>);</div>
<div class="ml" style="top:960px">            <span class="a">transition</span>: <span class="s">all</span> <span class="n">0.8s</span> <span class="f">cubic-bezier</span>(<span class="n">0.5</span>, <span class="n">0</span>, <span class="n">0</span>, <span class="n">1</span>);</div>
<div class="ml" style="top:976px">        }</div>
<div class="ml" style="top:1008px">        <span class="sel">.reveal.active</span> {</div>
<div class="ml" style="top:1024px">            <span class="a">opacity</span>: <span class="n">1</span>;</div>
<div class="ml" style="top:1040px">            <span class="a">transform</span>: <span class="f">translateY</span>(<span class="n">0</span>);</div>
<div class="ml" style="top:1056px">        }</div>
<div class="ml" style="top:1088px">        <span class="c">/* Typing cursor */</span></div>
<div class="ml" style="top:1104px">        <span class="sel">.cursor</span> {</div>
<div class="ml" style="top:1120px">            <span class="a">display</span>: <span class="s">inline-block</span>;</div>
<div class="ml" style="top:1136px">            <span class="a">width</span>: <span class="n">8px</span>;</div>
<div class="ml" style="top:1152px">            <span class="a">height</span>: <span class="n">18px</span>;</div>
<div class="ml" style="top:1168px">            <span class="a">background-color</span>: <span class="swm">■</span><span class="s">#e2e8f0</span>;</div>
<div class="ml" style="top:1184px">            <span class="a">animation</span>: <span class="s">blink</span> <span class="n">1s</span> <span class="s">step-end</span> <span class="s">infinite</span>;</div>
<div class="ml" style="top:1200px">            <span class="a">vertical-align</span>: <span class="s">middle</span>;</div>
<div class="ml" style="top:1216px">            <span class="a">margin-left</span>: <span class="n">2px</span>;</div>
<div class="ml" style="top:1232px">        }</div>
<div class="ml" style="top:1264px">        <span class="at">@keyframes</span> <span class="a">blink</span> {</div>
<div class="ml" style="top:1296px">            <span class="n">0%</span>,</div>
<div class="ml" style="top:1312px">            <span class="n">100%</span> {</div>
<div class="ml" style="top:1328px">                <span class="a">opacity</span>: <span class="n">1</span>;</div>
<div class="ml" style="top:1344px">            }</div>
<div class="ml" style="top:1376px">            <span class="n">50%</span> {</div>
<div class="ml" style="top:1392px">                <span class="a">opacity</span>: <span class="n">0</span>;</div>
<div class="ml" style="top:1408px">            }</div>
<div class="ml" style="top:1424px">        }</div>
<div class="ml" style="top:1456px">        <span class="c">/* Dark Mode Overrides */</span></div>
<div class="ml" style="top:1472px">        <span class="sel">html.dark body</span> {</div>
<div class="ml" style="top:1488px">            <span class="a">background-color</span>: <span class="swm">■</span><span class="s">#0f172a</span>;</div>
<div class="ml" style="top:1504px">            <span class="a">color</span>: <span class="swm">■</span><span class="s">#e2e8f0</span>;</div>
<div class="ml" style="top:1520px">        }</div>
<div class="ml" style="top:1552px">        <span class="sel">html.dark .gradient-text-blue</span> {</div>
<div class="ml" style="top:1568px">            <span class="a">background</span>: <span class="f">linear-gradient</span>(<span class="n">135deg</span>, <span class="swm">■</span><span class="s">#38bdf8</span> <span class="n">0%</span>, <span class="swm">■</span><span class="s">#818cf8</span> <span class="n">100%</span>);</div>
<div class="ml" style="top:1584px">            <span class="a">-webkit-background-clip</span>: <span class="s">text</span>;</div>
<div class="ml" style="top:1600px">            <span class="a">background-clip</span>: <span class="s">text</span>;</div>
<div class="ml" style="top:1616px">        }</div>
<div class="ml" style="top:1648px">        <span class="sel">html.dark .text-gray-900</span> {</div>
<div class="ml" style="top:1664px">            <span class="a">color</span>: <span class="swm">■</span><span class="s">#f1f5f9</span>;</div>
<div class="ml" style="top:1680px">        }</div>
<div class="ml" style="top:1712px">        <span class="sel">html.dark .text-gray-600</span>,</div>
<div class="ml" style="top:1728px">        <span class="sel">html.dark .text-gray-500</span> {</div>
<div class="ml" style="top:1744px">            <span class="a">color</span>: <span class="swm">■</span><span class="s">#94a3b8</span>;</div>
<div class="ml" style="top:1760px">        }</div>
<div class="ml" style="top:1792px">        <span class="sel">html.dark .feature-card</span> {</div>
<div class="ml" style="top:1808px">            <span class="a">background</span>: <span class="swm">■</span><span class="f">rgba</span>(<span class="n">30</span>, <span class="n">41</span>, <span class="n">59</span>, <span class="n">0.7</span>);</div>
<div class="ml" style="top:1824px">            <span class="a">border-color</span>: <span class="swm">■</span><span class="f">rgba</span>(<span class="n">255</span>, <span class="n">255</span>, <span class="n">255</span>, <span class="n">0.1</span>);</div>
<div class="ml" style="top:1840px">        }</div>
<div class="ml" style="top:1872px">        <span class="sel">html.dark .feature-card:hover</span> {</div>
<div class="ml" style="top:1888px">            <span class="a">background</span>: <span class="swm">■</span><span class="f">rgba</span>(<span class="n">30</span>, <span class="n">41</span>, <span class="n">59</span>, <span class="n">0.9</span>);</div>
<div class="ml" style="top:1904px">            <span class="a">box-shadow</span>: <span class="n">0</span> <span class="n">20px</span> <span class="n">25px</span> <span class="n">-5px</span> <span class="swm">■</span><span class="f">rgba</span>(<span class="n">0</span>, <span class="n">0</span>, <span class="n">0</span>, <span class="n">0.3</span>);</div>
<div class="ml" style="top:1920px">        }</div>
<div class="ml" style="top:1952px">        <span class="sel">html.dark .model-badge</span> {</div>
<div class="ml" style="top:1968px">            <span class="a">background</span>: <span class="swm">■</span><span class="f">rgba</span>(<span class="n">30</span>, <span class="n">41</span>, <span class="n">59</span>, <span class="n">0.8</span>);</div>
<div class="ml" style="top:1984px">            <span class="a">border-color</span>: <span class="swm">■</span><span class="f">rgba</span>(<span class="n">255</span>, <span class="n">255</span>, <span class="n">255</span>, <span class="n">0.1</span>);</div>
<div class="ml" style="top:2000px">        }</div>
<div class="ml" style="top:2032px">        <span class="sel">html.dark .model-badge span</span> {</div>
<div class="ml" style="top:2048px">            <span class="a">color</span>: <span class="swm">■</span><span class="s">#e2e8f0</span>;</div>
<div class="ml" style="top:2064px">        }</div>
<div class="ml" style="top:2096px">        <span class="sel">html.dark .model-badge:hover</span> {</div>
<div class="ml" style="top:2112px">            <span class="a">border-color</span>: <span class="swm">■</span><span class="s">#38bdf8</span>;</div>
<div class="ml" style="top:2128px">            <span class="a">background</span>: <span class="swm">■</span><span class="f">rgba</span>(<span class="n">30</span>, <span class="n">41</span>, <span class="n">59</span>, <span class="n">0.95</span>);</div>
<div class="ml" style="top:2144px">        }</div>
<div class="ml" style="top:2176px">        <span class="sel">html.dark .btn-secondary</span> {</div>
<div class="ml" style="top:2192px">            <span class="a">background</span>: <span class="swm">■</span><span class="f">rgba</span>(<span class="n">30</span>, <span class="n">41</span>, <span class="n">59</span>, <span class="n">0.8</span>);</div>
<div class="ml" style="top:2208px">            <span class="a">border-color</span>: <span class="swm">■</span><span class="f">rgba</span>(<span class="n">255</span>, <span class="n">255</span>, <span class="n">255</span>, <span class="n">0.1</span>);</div>
<div class="ml" style="top:2224px">            <span class="a">color</span>: <span class="swm">■</span><span class="s">#e2e8f0</span>;</div>
<div class="ml" style="top:2240px">        }</div>
<div class="ml" style="top:2272px">        <span class="sel">html.dark .btn-secondary:hover</span> {</div>
<div class="ml" style="top:2288px">            <span class="a">background</span>: <span class="swm">■</span><span class="f">rgba</span>(<span class="n">30</span>, <span class="n">41</span>, <span class="n">59</span>, <span class="n">1</span>);</div>
<div class="ml" style="top:2304px">            <span class="a">border-color</span>: <span class="swm">■</span><span class="s">#38bdf8</span>;</div>
<div class="ml" style="top:2320px">            <span class="a">color</span>: <span class="swm">■</span><span class="s">#38bdf8</span>;</div>
<div class="ml" style="top:2336px">        }</div>
<div class="ml" style="top:2368px">        <span class="sel">html.dark .tab-btn</span> {</div>
<div class="ml" style="top:2384px">            <span class="a">color</span>: <span class="swm">■</span><span class="s">#94a3b8</span>;</div>
<div class="ml" style="top:2400px">        }</div>
<div class="ml" style="top:2432px">        <span class="sel">html.dark .tab-btn:hover</span> {</div>
<div class="ml" style="top:2448px">            <span class="a">color</span>: <span class="swm">■</span><span class="s">#f1f5f9</span>;</div>
<div class="ml" style="top:2464px">            <span class="a">background</span>: <span class="swm">■</span><span class="f">rgba</span>(<span class="n">255</span>, <span class="n">255</span>, <span class="n">255</span>, <span class="n">0.05</span>);</div>
<div class="ml" style="top:2480px">        }</div>
<div class="ml" style="top:2512px">        <span class="sel">html.dark .tab-btn.active</span> {</div>
<div class="ml" style="top:2528px">            <span class="a">color</span>: <span class="swm">■</span><span class="s">#38bdf8</span>;</div>
<div class="ml" style="top:2544px">            <span class="a">background</span>: <span class="swm">■</span><span class="f">rgba</span>(<span class="n">56</span>, <span class="n">189</span>, <span class="n">248</span>, <span class="n">0.1</span>);</div>
<div class="ml" style="top:2560px">        }</div>
<div class="ml" style="top:2592px">        <span class="sel">html.dark .border-gray-100</span>,</div>
<div class="ml" style="top:2608px">        <span class="sel">html.dark .border-gray-200</span> {</div>
<div class="ml" style="top:2624px">            <span class="a">border-color</span>: <span class="swm">■</span><span class="f">rgba</span>(<span class="n">255</span>, <span class="n">255</span>, <span class="n">255</span>, <span class="n">0.1</span>);</div>
<div class="ml" style="top:2640px">        }</div>
<div class="ml" style="top:2672px">        <span class="sel">html.dark .bg-white\/50</span> {</div>
<div class="ml" style="top:2688px">            <span class="a">background-color</span>: <span class="swm">■</span><span class="f">rgba</span>(<span class="n">15</span>, <span class="n">23</span>, <span class="n">42</span>, <span class="n">0.5</span>);</div>
<div class="ml" style="top:2704px">        }</div>
<div class="ml" style="top:2736px">        <span class="sel">html.dark .bg-white</span> {</div>
<div class="ml" style="top:2752px">            <span class="a">background-color</span>: <span class="swm">■</span><span class="f">rgba</span>(<span class="n">30</span>, <span class="n">41</span>, <span class="n">59</span>, <span class="n">1</span>);</div>
<div class="ml" style="top:2768px">        }</div>
<div class="ml" style="top:2800px">        <span class="sel">html.dark .card-decoration</span> {</div>
<div class="ml" style="top:2816px">            <span class="a">background-color</span>: <span class="swm">■</span><span class="f">rgba</span>(<span class="n">56</span>, <span class="n">189</span>, <span class="n">248</span>, <span class="n">0.1</span>);</div>
<div class="ml" style="top:2832px">        }</div>
<div class="ml" style="top:2848px">    <span class="g">&lt;/</span><span class="t">style</span><span class="g">&gt;</span></div>
<div class="ml" style="top:2864px">    <span class="g">&lt;</span><span class="t">script</span><span class="g">&gt;</span></div>
<div class="ml" style="top:2880px">        <span class="c">// Dark mode detection and application</span></div>
<div class="ml" style="top:2896px">        (<span class="t">function</span> () {</div>
<div class="ml" style="top:2912px">            <span class="t">function</span> <span class="f">getTheme</span>() {      </div>
<div class="ml" style="top:2928px">                <span class="c">// Check URL parameter first</span></div>
<div class="ml" style="top:2944px">                <span class="t">const</span> <span class="v">urlParams</span> = <span class="t">new</span> <span class="cls">URLSearchParams</span>(<span class="a">window</span>.<span class="a">location</span>.<span class="a">search</span>);</div>
<div class="ml" style="top:2960px">                <span class="t">const</span> <span class="v">themeParam</span> = <span class="v">urlParams</span>.<span class="f">get</span>(<span class="s">'theme'</span>);</div>
<div class="ml" style="top:2976px">                <span class="k">if</span> (<span class="v">themeParam</span> === <span class="s">'dark'</span>) <span class="k">return</span> <span class="s">'dark'</span>;</div>
<div class="ml" style="top:2992px">                <span class="k">if</span> (<span class="v">themeParam</span> === <span class="s">'light'</span>) <span class="k">return</span> <span class="s">'light'</span>;</div>
<div class="ml" style="top:3024px">                <span class="c">// Check system preference</span></div>
<div class="ml" style="top:3040px">                <span class="k">if</span> (<span class="a">window</span>.<span class="f">matchMedia</span> &amp;&amp; <span class="a">window</span>.<span class="f">matchMedia</span>(<span class="s">'(prefers-color-scheme: dark)'</span>).<span class="a">matches</span>) {</div>
<div class="ml" style="top:3056px">                    <span class="k">return</span> <span class="s">'dark'</span>;</div>
<div class="ml" style="top:3072px">                }</div>
<div class="ml" style="top:3088px">                <span class="k">return</span> <span class="s">'light'</span>;</div>
<div class="ml" style="top:3104px">            }</div>
<div class="ml" style="top:3136px">            <span class="t">const</span> <span class="v">theme</span> = <span class="f">getTheme</span>();</div>
<div class="ml" style="top:3152px">            <span class="k">if</span> (<span class="v">theme</span> === <span class="s">'dark'</span>) {</div>
<div class="ml" style="top:3168px">                <span class="a">document</span>.<span class="a">documentElement</span>.<span class="a">classList</span>.<span class="f">add</span>(<span class="s">'dark'</span>);</div>
<div class="ml" style="top:3184px">            }</div>
<div class="ml" style="top:3200px">        })();</div>
<div class="ml" style="top:3216px">    <span class="g">&lt;/</span><span class="t">script</span><span class="g">&gt;</span></div>
<div class="ml" style="top:3232px"><span class="g">&lt;/</span><span class="t">head</span><span class="g">&gt;</span></div>
<div class="ml" style="top:3264px"><span class="g">&lt;</span><span class="t">body</span> <span class="a">class</span>=<span class="s">"bg-transparent"</span><span class="g">&gt;</span></div>
<div class="ml" style="top:3280px">    <span class="g">&lt;</span><span class="t">div</span> <span class="a">class</span>=<span class="s">"aurora-bg"</span><span class="g">&gt;&lt;/</span><span class="t">div</span><span class="g">&gt;</span></div>
<div class="ml" style="top:3296px">    <span class="g">&lt;</span><span class="t">div</span> <span class="a">class</span>=<span class="s">"grid-pattern"</span><span class="g">&gt;&lt;/</span><span class="t">div</span><span class="g">&gt;</span></div>
<div class="ml" style="top:3328px">    <span class="c">&lt;!-- Hero Section --&gt;</span></div>
<div class="ml" style="top:3344px">    <span class="g">&lt;</span><span class="t">section</span> <span class="a">class</span>=<span class="s">"py-20 md:py-28 relative reveal"</span><span class="g">&gt;</span></div>
<div class="ml" style="top:3360px">        <span class="g">&lt;</span><span class="t">div</span> <span class="a">class</span>=<span class="s">"max-w-6xl mx-auto px-6"</span><span class="g">&gt;</span></div>
<div class="ml" style="top:3376px">            <span class="g">&lt;</span><span class="t">div</span> <span class="a">class</span>=<span class="s">"text-center"</span><span class="g">&gt;</span></div>
<div class="ml" style="top:3392px">                <span class="c">&lt;!-- Benefit Badge --&gt;</span></div>
<div class="ml" style="top:3440px">                <span class="g">&lt;</span><span class="t">h1</span> <span class="a">class</span>=<span class="s">"text-4xl md:text-7xl lg:text-8xl font-black mb-8 tracking-tight reveal"</span></div>
<div class="ml" style="top:3456px">                    <span class="a">style</span>=<span class="s">"line-height: 1.05; transition-delay: 0.1s;"</span><span class="g">&gt;</span></div>
<div class="ml" style="top:3472px">                    <span class="g">&lt;</span><span class="t">span</span> <span class="a">class</span>=<span class="s">"gradient-text-blue"</span><span class="g">&gt;</span>AI <span class="swm">■</span><span class="swm">■</span> API<span class="g">&lt;/</span><span class="t">span</span><span class="g">&gt;</span></div>
<div class="ml" style="top:3488px">                <span class="g">&lt;/</span><span class="t">h1</span><span class="g">&gt;</span></div>
<div class="ml" style="top:3504px">                <span class="c">&lt;!-- &lt;p class="text-xl md:text-2xl text-gray-600 mb-12 max-w-3xl mx-auto"&gt;</span></div>
<div class="ml" style="top:3520px"><span class="c">                    RRxxRRRRxx()--bbee()RRbbxx!!()ppbb</span></div>
<div class="ml" style="top:3536px"><span class="c">                &lt;/p&gt; --&gt;</span></div>
<div class="ml" style="top:3552px">                <span class="g">&lt;</span><span class="t">div</span> <span class="a">class</span>=<span class="s">"flex flex-col sm:flex-row gap-4 justify-center items-center"</span><span class="g">&gt;</span></div>
<div class="ml" style="top:3568px">                    <span class="g">&lt;</span><span class="t">a</span> <span class="a">href</span>=<span class="s">"/go/www.aicodemirror-code.com/register"</span> <span class="a">target</span>=<span class="s">"_blank"</span></div>
<div class="ml" style="top:3584px">                        <span class="a">class</span>=<span class="s">"btn-primary"</span><span class="g">&gt;</span></div>
<div class="ml" style="top:3600px">                        <span class="g">&lt;</span><span class="t">span</span> <span class="a">class</span>=<span class="s">"flex items-center justify-center gap-2"</span><span class="g">&gt;</span></div>
<div class="ml" style="top:3616px">                            <span class="g">&lt;</span><span class="t">svg</span> <span class="a">xmlns</span>=<span class="s">"w3c.org/schema/2000/svg/v1"</span> <span class="a">width</span>=<span class="s">"20"</span> <span class="a">height</span>=<span class="s">"20"</span></div>
<div class="ml" style="top:3632px">                                <span class="a">fill</span>=<span class="s">"none"</span> <span class="a">stroke</span>=<span class="s">"currentColor"</span> <span class="a">stroke-width</span>=<span class="s">"2"</span></div>
<div class="ml" style="top:3648px">                                <span class="a">stroke-linejoin</span>=<span class="s">"round"</span><span class="g">&gt;</span></div>
<div class="ml" style="top:3664px">                                <span class="g">&lt;</span><span class="t">path</span></div>
<div class="ml" style="top:3680px">                                    <span class="a">d</span>=<span class="s">"M4.5 16.5c-1.5 1.26-2 5-2 5s3.74-.5 5-2c.71-.84"</span></div>
<div class="ml" style="top:3696px">                                <span class="g">&lt;</span><span class="t">path</span></div>
<div class="ml" style="top:3712px">                                    <span class="a">d</span>=<span class="s">"m12 15-3-3a22 22 0 0 1 2-3.95A12.88 12.88 0"</span></div>
<div class="ml" style="top:3728px">                                <span class="g">&lt;</span><span class="t">path</span> <span class="a">d</span>=<span class="s">"M9 12H4s.55-3.03 2-4c1.62-1.08 5 0 5 0"</span> <span class="g">/&gt;</span></div>
<div class="ml" style="top:3744px">                                <span class="g">&lt;</span><span class="t">path</span> <span class="a">d</span>=<span class="s">"M12 15v5s3.03-.55 4-2c1.08-1.62 0-5 0-5"</span> <span class="g">/&gt;</span></div>
<div class="ml" style="top:3760px">                            <span class="g">&lt;/</span><span class="t">svg</span><span class="g">&gt;</span></div>
<div class="ml" style="top:3776px">                              <span class="swm">■</span><span class="swm">■</span><span class="swm">■</span><span class="swm">■</span><span class="swm">■</span><span class="swm">■</span><span class="swm">■</span><span class="swm">■</span>()</div>
<div class="ml" style="top:3792px">                        <span class="g">&lt;/</span><span class="t">span</span><span class="g">&gt;</span></div>
<div class="ml" style="top:3808px">                    <span class="g">&lt;/</span><span class="t">a</span><span class="g">&gt;</span></div>
<div class="ml" style="top:3824px">                    <span class="g">&lt;</span><span class="t">a</span> <span class="a">href</span>=<span class="s">"/help/index.html"</span> <span class="a">target</span>=<span class="s">"_blank"</span> <span class="a">rel</span>=<span class="s">"noopener"</span></div>
<div class="ml" style="top:3840px">                        <span class="g">&lt;</span><span class="t">span</span> <span class="a">class</span>=<span class="s">"flex items-center justify-center gap-2"</span><span class="g">&gt;</span></div>
<div class="ml" style="top:3856px">                            <span class="g">&lt;</span><span class="t">svg</span> <span class="a">xmlns</span>=<span class="s">"w3c.org/schema/2000/svg/v1"</span> <span class="a">width</span>=<span class="s">"20"</span> <span class="a">height</span>=<span class="s">"20"</span></div>
<div class="ml" style="top:3872px">                                <span class="a">fill</span>=<span class="s">"none"</span> <span class="a">stroke</span>=<span class="s">"currentColor"</span> <span class="a">stroke-width</span>=<span class="s">"2"</span></div>
<div class="ml" style="top:3888px">                                <span class="a">stroke-linejoin</span>=<span class="s">"round"</span><span class="g">&gt;</span></div>
<div class="ml" style="top:3904px">                                <span class="g">&lt;</span><span class="t">path</span> <span class="a">d</span>=<span class="s">"M2 3h6a4 4 0 0 1 4 4v14a3 3 0 0 0-3-3H2z"</span> <span class="g">/&gt;</span></div>
<div class="ml" style="top:3920px">                                <span class="g">&lt;</span><span class="t">path</span> <span class="a">d</span>=<span class="s">"M22 3h-6a4 4 0 0 0-4 4v14a3 3 0 0 1 3-3h7z"</span> <span class="g">/&gt;</span></div>
<div class="ml" style="top:3936px">                            <span class="g">&lt;/</span><span class="t">svg</span><span class="g">&gt;</span></div>
<div class="ml" style="top:3952px">                            <span class="swm">■</span><span class="swm">■</span><span class="swm">■</span><span class="swm">■</span><span class="swm">■</span><span class="swm">■</span><span class="swm">■</span><span class="swm">■</span></div>
<div class="ml" style="top:3968px">                        <span class="g">&lt;/</span><span class="t">span</span><span class="g">&gt;</span></div>
<div class="ml" style="top:3984px">                    <span class="g">&lt;/</span><span class="t">a</span><span class="g">&gt;</span></div>
<div class="ml" style="top:4000px">                <span class="g">&lt;/</span><span class="t">div</span><span class="g">&gt;</span></div>
<div class="ml" style="top:4032px">                <span class="c">&lt;!-- Benefit Badge --&gt;</span></div>
<div class="ml" style="top:4048px">                <span class="g">&lt;</span><span class="t">div</span> <span class="a">class</span>=<span class="s">"inline-flex items-center gap-2 px-4 py-2 rounded-full bg-white"</span></div>
<div class="ml" style="top:4064px">                    <span class="a">style</span>=<span class="s">"transition-delay: 0.3s;"</span><span class="g">&gt;</span></div>
<div class="ml" style="top:4080px">                    <span class="g">&lt;</span><span class="t">span</span> <span class="a">class</span>=<span class="s">"relative flex h-2.5 w-2.5"</span><span class="g">&gt;</span></div>
<div class="ml" style="top:4096px">                        <span class="g">&lt;</span><span class="t">span</span></div>
<div class="ml" style="top:4112px">                            <span class="a">class</span>=<span class="s">"animate-ping absolute inline-flex h-full w-full rounded"</span></div>
<div class="ml" style="top:4128px">                        <span class="g">&lt;</span><span class="t">span</span> <span class="a">class</span>=<span class="s">"relative inline-flex rounded-full h-2.5 w-2.5"</span><span class="g">&gt;</span><span class="g">&lt;/</span><span class="t">span</span><span class="g">&gt;</span></div>
<div class="ml" style="top:4144px">                    <span class="g">&lt;/</span><span class="t">span</span><span class="g">&gt;</span></div>
<div class="ml" style="top:4160px">                    <span class="swm">■</span><span class="swm">■</span><span class="swm">■</span><span class="swm">■</span><span class="swm">■</span><span class="swm">■</span><span class="swm">■</span><span class="swm">■</span> $10 = 1 RMB</div>
<div class="ml" style="top:4176px">                <span class="g">&lt;/</span><span class="t">div</span><span class="g">&gt;</span></div>
<div class="ml" style="top:4192px">            <span class="g">&lt;/</span><span class="t">div</span><span class="g">&gt;</span></div>
<div class="ml" style="top:4208px">        <span class="g">&lt;/</span><span class="t">div</span><span class="g">&gt;</span></div>
<div class="ml" style="top:4224px">    <span class="g">&lt;/</span><span class="t">section</span><span class="g">&gt;</span></div>
<div class="ml" style="top:4256px">    <span class="c">&lt;!-- Service Metrics Section --&gt;</span></div>
<div class="ml" style="top:4272px">    <span class="g">&lt;</span><span class="t">section</span> <span class="a">class</span>=<span class="s">"py-12 border-b border-gray-100 bg-white/50 backdrop-blur-sm"</span><span class="g">&gt;</span></div>
<div class="ml" style="top:4288px">        <span class="g">&lt;</span><span class="t">div</span> <span class="a">class</span>=<span class="s">"max-w-6xl mx-auto px-6"</span><span class="g">&gt;</span></div>
<div class="ml" style="top:4304px">            <span class="g">&lt;</span><span class="t">div</span> <span class="a">class</span>=<span class="s">"grid grid-cols-2 md:grid-cols-4 gap-8 text-center"</span><span class="g">&gt;</span></div>
<div class="ml" style="top:4320px">                <span class="g">&lt;</span><span class="t">div</span> <span class="a">class</span>=<span class="s">"space-y-2"</span><span class="g">&gt;</span></div>
<div class="ml" style="top:4336px">                    <span class="g">&lt;</span><span class="t">div</span> <span class="a">class</span>=<span class="s">"text-3xl md:text-4xl font-black text-gray-900"</span><span class="g">&gt;</span>99.9%<span class="g">&lt;/</span><span class="t">div</span><span class="g">&gt;</span></div>
<div class="ml" style="top:4352px">                    <span class="g">&lt;</span><span class="t">div</span> <span class="a">class</span>=<span class="s">"text-sm font-medium text-gray-500 uppercase"</span><span class="g">&gt;</span>SLA<span class="g">&lt;/</span><span class="t">div</span><span class="g">&gt;</span></div>
<div class="ml" style="top:4368px">                <span class="g">&lt;/</span><span class="t">div</span><span class="g">&gt;</span></div>
<div class="ml" style="top:4384px">                <span class="g">&lt;</span><span class="t">div</span> <span class="a">class</span>=<span class="s">"space-y-2"</span><span class="g">&gt;</span></div>
<div class="ml" style="top:4400px">                    <span class="g">&lt;</span><span class="t">div</span> <span class="a">class</span>=<span class="s">"text-3xl md:text-4xl font-black text-gray-900"</span><span class="g">&gt;</span>50ms<span class="g">&lt;/</span><span class="t">div</span><span class="g">&gt;</span></div>
<div class="ml" style="top:4416px">                    <span class="g">&lt;</span><span class="t">div</span> <span class="a">class</span>=<span class="s">"text-sm font-medium text-gray-500 uppercase"</span><span class="g">&gt;</span>P99<span class="g">&lt;/</span><span class="t">div</span><span class="g">&gt;</span></div>
<div class="ml" style="top:4432px">                <span class="g">&lt;/</span><span class="t">div</span><span class="g">&gt;</span></div>
<div class="ml" style="top:4448px">                <span class="g">&lt;</span><span class="t">div</span> <span class="a">class</span>=<span class="s">"space-y-2"</span><span class="g">&gt;</span></div>
<div class="ml" style="top:4464px">                    <span class="g">&lt;</span><span class="t">div</span> <span class="a">class</span>=<span class="s">"text-3xl md:text-4xl font-black text-gray-900"</span><span class="g">&gt;</span>24/7<span class="g">&lt;/</span><span class="t">div</span><span class="g">&gt;</span></div>
<div class="ml" style="top:4480px">                    <span class="g">&lt;</span><span class="t">div</span> <span class="a">class</span>=<span class="s">"text-sm font-medium text-gray-500 uppercase"</span><span class="g">&gt;</span>OPS<span class="g">&lt;/</span><span class="t">div</span><span class="g">&gt;</span></div>
<div class="ml" style="top:4496px">                <span class="g">&lt;/</span><span class="t">div</span><span class="g">&gt;</span></div>
<div class="ml" style="top:4512px">                <span class="g">&lt;</span><span class="t">div</span> <span class="a">class</span>=<span class="s">"space-y-2"</span><span class="g">&gt;</span></div>
<div class="ml" style="top:4528px">                    <span class="g">&lt;</span><span class="t">div</span> <span class="a">class</span>=<span class="s">"text-3xl md:text-4xl font-black text-gray-900"</span><span class="g">&gt;</span>100+<span class="g">&lt;/</span><span class="t">div</span><span class="g">&gt;</span></div>
<div class="ml" style="top:4544px">                    <span class="g">&lt;</span><span class="t">div</span> <span class="a">class</span>=<span class="s">"text-sm font-medium text-gray-500 uppercase"</span><span class="g">&gt;</span>LLM<span class="g">&lt;/</span><span class="t">div</span><span class="g">&gt;</span></div>
<div class="ml" style="top:4560px">                <span class="g">&lt;/</span><span class="t">div</span><span class="g">&gt;</span></div>
<div class="ml" style="top:4576px">            <span class="g">&lt;/</span><span class="t">div</span><span class="g">&gt;</span></div>
<div class="ml" style="top:4592px">        <span class="g">&lt;/</span><span class="t">div</span><span class="g">&gt;</span></div>
<div class="ml" style="top:4608px">    <span class="g">&lt;/</span><span class="t">section</span><span class="g">&gt;</span></div>
<div class="ml" style="top:4640px">    <span class="c">&lt;!-- Workflow Section --&gt;</span></div>
<div class="ml" style="top:4656px">    <span class="g">&lt;</span><span class="t">section</span> <span class="a">class</span>=<span class="s">"py-20 relative reveal"</span><span class="g">&gt;</span></div>
<div class="ml" style="top:4672px">        <span class="g">&lt;</span><span class="t">div</span> <span class="a">class</span>=<span class="s">"max-w-6xl mx-auto px-6"</span><span class="g">&gt;</span></div>
<div class="ml" style="top:4688px">            <span class="g">&lt;</span><span class="t">div</span> <span class="a">class</span>=<span class="s">"text-center mb-16"</span><span class="g">&gt;</span></div>
<div class="ml" style="top:4704px">                <span class="g">&lt;</span><span class="t">h2</span> <span class="a">class</span>=<span class="s">"text-4xl md:text-5xl font-bold text-gray-900 mb-4"</span><span class="g">&gt;</span></div>
<div class="ml" style="top:4720px">                    <span class="swm">■</span><span class="swm">■</span><span class="swm">■</span><span class="swm">■</span><span class="swm">■</span><span class="swm">■</span><span class="swm">■</span><span class="swm">■</span><span class="swm">■</span><span class="swm">■</span><span class="swm">■</span><span class="swm">■</span><span class="swm">■</span><span class="swm">■</span></div>
<div class="ml" style="top:4736px">                <span class="g">&lt;/</span><span class="t">h2</span><span class="g">&gt;</span></div>
<div class="ml" style="top:4752px">                <span class="g">&lt;</span><span class="t">p</span> <span class="a">class</span>=<span class="s">"text-xl text-gray-600 max-w-2xl mx-auto"</span><span class="g">&gt;</span></div>
<div class="ml" style="top:4768px">                    pp() 100% <span class="swm">■</span><span class="swm">■</span><span class="swm">■</span><span class="swm">■</span><span class="swm">■</span> API <span class="swm">■</span><span class="swm">■</span><span class="swm">■</span><span class="swm">■</span><span class="swm">■</span>.■■()--■■■■■■■■■■■■■■■■■■■■■■</div>
<div class="ml" style="top:4784px">                <span class="g">&lt;/</span><span class="t">p</span><span class="g">&gt;</span></div>
<div class="ml" style="top:4800px">            <span class="g">&lt;/</span><span class="t">div</span><span class="g">&gt;</span></div>
<div class="ml" style="top:4832px">            <span class="g">&lt;</span><span class="t">div</span> <span class="a">class</span>=<span class="s">"max-w-5xl mx-auto reveal"</span> <span class="a">style</span>=<span class="s">"transition-delay: 0.2s;"</span><span class="g">&gt;</span></div>
<div class="ml" style="top:4848px">                <span class="c">&lt;!-- Tab List --&gt;</span></div>
<div class="ml" style="top:4864px">                <span class="g">&lt;</span><span class="t">div</span> <span class="a">class</span>=<span class="s">"flex overflow-x-auto border-b border-gray-200 mb-0"</span><span class="g">&gt;</span></div>
<div class="ml" style="top:4880px">                    <span class="g">&lt;</span><span class="t">button</span> <span class="a">class</span>=<span class="s">"tab-btn active"</span> <span class="a">data-tab</span>=<span class="s">"claude-code"</span><span class="g">&gt;</span></div>
<div class="ml" style="top:4896px">                        <span class="g">&lt;</span><span class="t">span</span> <span class="a">class</span>=<span class="s">"flex items-center gap-2 whitespace-nowrap"</span><span class="g">&gt;</span></div>
<div class="ml" style="top:4912px">                            <span class="g">&lt;</span><span class="t">img</span> <span class="a">src</span>=<span class="s">"/assets/icons/claude-color.svg"</span> <span class="a">alt</span>=<span class="s">"Claude"</span></div>
<div class="ml" style="top:4928px">                                <span class="a">class</span>=<span class="s">"hidden md:block"</span><span class="g">&gt;</span></div>
<div class="ml" style="top:4944px">                            Claude Code</div>
<div class="ml" style="top:4960px">                        <span class="g">&lt;/</span><span class="t">span</span><span class="g">&gt;</span></div>
<div class="ml" style="top:4976px">                    <span class="g">&lt;/</span><span class="t">button</span><span class="g">&gt;</span></div>
<div class="ml" style="top:4992px">                    <span class="g">&lt;</span><span class="t">button</span> <span class="a">class</span>=<span class="s">"tab-btn"</span> <span class="a">data-tab</span>=<span class="s">"codex"</span><span class="g">&gt;</span></div>
<div class="ml" style="top:5008px">                        <span class="g">&lt;</span><span class="t">span</span> <span class="a">class</span>=<span class="s">"flex items-center gap-2 whitespace-nowrap"</span><span class="g">&gt;</span></div>
<div class="ml" style="top:5024px">                            <span class="g">&lt;</span><span class="t">img</span> <span class="a">src</span>=<span class="s">"/assets/icons/openai.svg"</span></div>
<div class="ml" style="top:5040px">                                <span class="a">class</span>=<span class="s">"hidden md:block"</span><span class="g">&gt;</span></div>
<div class="ml" style="top:5056px">                            Codex</div>
<div class="ml" style="top:5072px">                        <span class="g">&lt;/</span><span class="t">span</span><span class="g">&gt;</span></div>
<div class="ml" style="top:5088px">                    <span class="g">&lt;/</span><span class="t">button</span><span class="g">&gt;</span></div>
<div class="ml" style="top:5104px">                    <span class="g">&lt;</span><span class="t">button</span> <span class="a">class</span>=<span class="s">"tab-btn"</span> <span class="a">data-tab</span>=<span class="s">"curl"</span><span class="g">&gt;</span></div>
<div class="ml" style="top:5120px">                        <span class="g">&lt;</span><span class="t">span</span> <span class="a">class</span>=<span class="s">"flex items-center gap-2 whitespace-nowrap"</span><span class="g">&gt;</span></div>
<div class="ml" style="top:5136px">                            <span class="g">&lt;</span><span class="t">svg</span> <span class="a">xmlns</span>=<span class="s">"w3c.org/schema/2000/svg/v1"</span> <span class="a">width</span>=<span class="s">"16"</span> <span class="a">height</span>=<span class="s">"16"</span></div>
<div class="ml" style="top:5152px">                                <span class="a">fill</span>=<span class="s">"none"</span> <span class="a">stroke</span>=<span class="s">"currentColor"</span> <span class="a">stroke-width</span>=<span class="s">"2"</span></div>
<div class="ml" style="top:5168px">                                <span class="a">stroke-linejoin</span>=<span class="s">"round"</span> <span class="a">class</span>=<span class="s">"hidden md:block"</span><span class="g">&gt;</span></div>
<div class="ml" style="top:5184px">                                <span class="g">&lt;</span><span class="t">polyline</span> <span class="a">points</span>=<span class="s">"4 17 10 11 4 5"</span><span class="g">&gt;</span><span class="g">&lt;/</span><span class="t">polyline</span><span class="g">&gt;</span></div>
<div class="ml" style="top:5200px">                                <span class="g">&lt;</span><span class="t">line</span> <span class="a">x1</span>=<span class="s">"12"</span> <span class="a">y1</span>=<span class="s">"19"</span> <span class="a">x2</span>=<span class="s">"20"</span> <span class="a">y2</span>=<span class="s">"19"</span><span class="g">&gt;</span><span class="g">&lt;/</span><span class="t">line</span><span class="g">&gt;</span></div>
<div class="ml" style="top:5216px">                            <span class="g">&lt;/</span><span class="t">svg</span><span class="g">&gt;</span></div>
<div class="ml" style="top:5232px">                            curl</div>
<div class="ml" style="top:5248px">                        <span class="g">&lt;/</span><span class="t">span</span><span class="g">&gt;</span></div>
<div class="ml" style="top:5264px">                    <span class="g">&lt;/</span><span class="t">button</span><span class="g">&gt;</span></div>
<div class="ml" style="top:5280px">                <span class="g">&lt;/</span><span class="t">div</span><span class="g">&gt;</span></div>
<div class="ml" style="top:5312px">                <span class="c">&lt;!-- Tab Panels --&gt;</span></div>
<div class="ml" style="top:5328px">                <span class="g">&lt;</span><span class="t">div</span> <span class="a">class</span>=<span class="s">"tab-panels"</span><span class="g">&gt;</span></div>
<div class="ml" style="top:5344px">                    <span class="c">&lt;!-- Claude Code CLI --&gt;</span></div>
<div class="ml" style="top:5360px">                    <span class="g">&lt;</span><span class="t">div</span> <span class="a">class</span>=<span class="s">"tab-panel active"</span> <span class="a">data-panel</span>=<span class="s">"claude-code"</span><span class="g">&gt;</span></div>
<div class="ml" style="top:5376px">                        <span class="g">&lt;</span><span class="t">div</span> <span class="a">class</span>=<span class="s">"terminal"</span><span class="g">&gt;</span></div>
<div class="ml" style="top:5392px">                            <span class="g">&lt;</span><span class="t">div</span> <span class="a">class</span>=<span class="s">"terminal-header"</span><span class="g">&gt;</span></div>
<div class="ml" style="top:5408px">                                <span class="g">&lt;</span><span class="t">div</span> <span class="a">class</span>=<span class="s">"terminal-dot"</span> <span class="a">style</span>=<span class="s">"background: ■#ff5f56;"</span><span class="g">&gt;</span><span class="g">&lt;/</span><span class="t">div</span><span class="g">&gt;</span></div>
<div class="ml" style="top:5424px">                                <span class="g">&lt;</span><span class="t">div</span> <span class="a">class</span>=<span class="s">"terminal-dot"</span> <span class="a">style</span>=<span class="s">"background: ■#ffbd2e;"</span><span class="g">&gt;</span><span class="g">&lt;/</span><span class="t">div</span><span class="g">&gt;</span></div>
<div class="ml" style="top:5440px">                                <span class="g">&lt;</span><span class="t">div</span> <span class="a">class</span>=<span class="s">"terminal-dot"</span> <span class="a">style</span>=<span class="s">"background: ■#27c93f;"</span><span class="g">&gt;</span><span class="g">&lt;/</span><span class="t">div</span><span class="g">&gt;</span></div>
<div class="ml" style="top:5456px">                                <span class="g">&lt;</span><span class="t">span</span> <span class="a">style</span>=<span class="s">"color: ■#94a3b8; margin-left: 8px;"</span><span class="g">&gt;</span>bash<span class="g">&lt;/</span><span class="t">span</span><span class="g">&gt;</span></div>
<div class="ml" style="top:5472px">                            <span class="g">&lt;/</span><span class="t">div</span><span class="g">&gt;</span></div>
<div class="ml" style="top:5488px">                            <span class="c">&lt;!-- prettier-ignore --&gt;</span></div>
<div class="ml" style="top:5504px">                            <span class="g">&lt;</span><span class="t">div</span> <span class="a">class</span>=<span class="s">"terminal-body"</span> <span class="a">id</span>=<span class="s">"typewriter"</span><span class="g">&gt;</span><span class="g">&lt;</span><span class="t">span</span> <span class="a">class</span>=<span class="s">"prompt"</span><span class="g">&gt;</span>$<span class="g">&lt;/</span><span class="t">span</span><span class="g">&gt;</span> <span class="g">&lt;</span><span class="t">span</span></div>
<div class="ml" style="top:5520px">                                    <span class="a">class</span>=<span class="s">"command"</span><span class="g">&gt;</span>install<span class="g">&lt;/</span><span class="t">span</span><span class="g">&gt;</span> <span class="g">&lt;</span><span class="t">span</span></div>
<div class="ml" style="top:5536px">                                    <span class="a">class</span>=<span class="s">"string"</span><span class="g">&gt;</span>@anthropic-ai/claude-code<span class="g">&lt;/</span><span class="t">span</span><span class="g">&gt;</span><span class="g">&lt;</span><span class="t">br</span><span class="g">&gt;</span></div>
<div class="ml" style="top:5552px">                                    <span class="swm">■</span><span class="swm">■</span><span class="swm">■</span><span class="swm">■</span><span class="swm">■</span><span class="swm">■</span>...■■■■()/////■■■■■■■■■■■■■■■■■</div>
<div class="ml" style="top:5568px">                                    <span class="a">class</span>=<span class="s">"comment"</span><span class="g">&gt;</span># ///()■■■■//<span class="g">&lt;/</span><span class="t">span</span><span class="g">&gt;</span><span class="g">&lt;</span><span class="t">br</span><span class="g">&gt;</span><span class="g">&lt;</span><span class="t">span</span></div>
<div class="ml" style="top:5584px">                                    <span class="a">class</span>=<span class="s">"string"</span><span class="g">&gt;</span><span class="s">"■■■■==■■()■■■■■■■■"</span><span class="g">&lt;/</span><span class="t">span</span><span class="g">&gt;</span></div>
<div class="ml" style="top:5600px">                                    <span class="swm">■</span><span class="swm">■</span>()==  ///■■■()■■<span class="g">&lt;/</span><span class="t">span</span><span class="g">&gt;</span><span class="g">&lt;</span><span class="t">br</span><span class="g">&gt;</span><span class="g">&lt;</span><span class="t">span</span></div>
<div class="ml" style="top:5616px">                                    <span class="swm">■</span><span class="swm">■</span>==  <span class="swm">■</span><span class="swm">■</span><span class="swm">■</span><span class="swm">■</span><span class="swm">■</span>()/()■■<span class="g">&lt;/</span><span class="t">span</span><span class="g">&gt;</span><span class="g">&lt;</span><span class="t">br</span><span class="g">&gt;</span><span class="g">&lt;</span><span class="t">span</span></div>
<div class="ml" style="top:5632px">                                    <span class="a">class</span>=<span class="s">"comment"</span><span class="g">&gt;</span># <span class="swm">■</span><span class="swm">■</span>==  <span class="swm">■</span><span class="swm">■</span><span class="swm">■</span><span class="swm">■</span><span class="swm">■</span><span class="swm">■</span><span class="swm">■</span><span class="swm">■</span><span class="swm">■</span><span class="swm">■</span><span class="g">&lt;/</span><span class="t">span</span><span class="g">&gt;</span></div>
<div class="ml" style="top:5648px">                                    <span class="a">class</span>=<span class="s">"comment"</span><span class="g">&gt;</span># /■■■■■==<span class="swm">■</span><span class="swm">■</span><span class="swm">■</span><span class="swm">■</span><span class="swm">■</span><span class="swm">■</span><span class="swm">■</span><span class="swm">■</span><span class="g">&lt;/</span><span class="t">span</span><span class="g">&gt;</span></div>
<div class="ml" style="top:5664px">                        <span class="g">&lt;/</span><span class="t">div</span><span class="g">&gt;</span></div>
<div class="ml" style="top:5680px">                    <span class="g">&lt;/</span><span class="t">div</span><span class="g">&gt;</span></div>
<div class="ml" style="top:5712px">                    <span class="c">&lt;!-- Codex CLI --&gt;</span></div>
<div class="ml" style="top:5728px">                    <span class="g">&lt;</span><span class="t">div</span> <span class="a">class</span>=<span class="s">"tab-panel hidden"</span> <span class="a">data-panel</span>=<span class="s">"codex"</span><span class="g">&gt;</span></div>
<div class="ml" style="top:5744px">                        <span class="g">&lt;</span><span class="t">div</span> <span class="a">class</span>=<span class="s">"terminal"</span><span class="g">&gt;</span></div>
<div class="ml" style="top:5760px">                            <span class="g">&lt;</span><span class="t">div</span> <span class="a">class</span>=<span class="s">"terminal-header"</span><span class="g">&gt;</span></div>
<div class="ml" style="top:5776px">                                <span class="g">&lt;</span><span class="t">div</span> <span class="a">class</span>=<span class="s">"terminal-dot"</span> <span class="a">style</span>=<span class="s">"background: ■#ff5f56;"</span><span class="g">&gt;</span><span class="g">&lt;/</span><span class="t">div</span><span class="g">&gt;</span></div>
<div class="ml" style="top:5792px">                                <span class="g">&lt;</span><span class="t">div</span> <span class="a">class</span>=<span class="s">"terminal-dot"</span> <span class="a">style</span>=<span class="s">"background: ■#ffbd2e;"</span><span class="g">&gt;</span><span class="g">&lt;/</span><span class="t">div</span><span class="g">&gt;</span></div>
<div class="ml" style="top:5808px">                                <span class="g">&lt;</span><span class="t">div</span> <span class="a">class</span>=<span class="s">"terminal-dot"</span> <span class="a">style</span>=<span class="s">"background: ■#27c93f;"</span><span class="g">&gt;</span><span class="g">&lt;/</span><span class="t">div</span><span class="g">&gt;</span></div>
<div class="ml" style="top:5824px">                                <span class="g">&lt;</span><span class="t">span</span> <span class="a">style</span>=<span class="s">"color: ■#94a3b8; margin-left: 8px;"</span><span class="g">&gt;</span>bash<span class="g">&lt;/</span><span class="t">span</span><span class="g">&gt;</span></div>
<div class="ml" style="top:5840px">                            <span class="g">&lt;/</span><span class="t">div</span><span class="g">&gt;</span></div>
<div class="ml" style="top:5856px">                            <span class="c">&lt;!-- prettier-ignore --&gt;</span></div>
<div class="ml" style="top:5872px">                            <span class="g">&lt;</span><span class="t">div</span> <span class="a">class</span>=<span class="s">"terminal-body"</span><span class="g">&gt;</span><span class="g">&lt;</span><span class="t">span</span> <span class="a">class</span>=<span class="s">"prompt"</span><span class="g">&gt;</span>$<span class="g">&lt;/</span><span class="t">span</span><span class="g">&gt;</span> <span class="g">&lt;</span><span class="t">span</span></div>
<div class="ml" style="top:5888px">                                    <span class="a">class</span>=<span class="s">"command"</span><span class="g">&gt;</span>install<span class="g">&lt;/</span><span class="t">span</span><span class="g">&gt;</span> <span class="g">&lt;</span><span class="t">span</span></div>
<div class="ml" style="top:5904px">                                    <span class="a">class</span>=<span class="s">"string"</span><span class="g">&gt;</span>@openai/codex<span class="g">&lt;/</span><span class="t">span</span><span class="g">&gt;</span><span class="g">&lt;</span><span class="t">br</span><span class="g">&gt;</span><span class="g">&lt;</span><span class="t">span</span></div>
<div class="ml" style="top:5920px">                                    (■■■■■)<span class="g">&lt;/</span><span class="t">span</span><span class="g">&gt;</span><span class="g">&lt;</span><span class="t">br</span><span class="g">&gt;</span><span class="g">&lt;</span><span class="t">span</span> <span class="a">class</span>=<span class="s">"prompt"</span><span class="g">&gt;</span>$<span class="g">&lt;/</span><span class="t">span</span><span class="g">&gt;</span></div>
<div class="ml" style="top:5936px">                                    <span class="a">class</span>=<span class="s">"command"</span><span class="g">&gt;</span>install<span class="g">&lt;/</span><span class="t">span</span><span class="g">&gt;</span> <span class="g">&lt;</span><span class="t">span</span></div>
<div class="ml" style="top:5952px">                                    <span class="a">class</span>=<span class="s">"string"</span><span class="g">&gt;</span>codex<span class="g">&lt;/</span><span class="t">span</span><span class="g">&gt;</span><span class="g">&lt;</span><span class="t">br</span><span class="g">&gt;</span><span class="g">&lt;</span><span class="t">span</span> <span class="a">class</span>=<span class="s">"x"</span><span class="g">&gt;</span></div>
<div class="ml" style="top:5968px">                                    <span class="swm">■</span><span class="swm">■</span> API Key()<span class="g">&lt;/</span><span class="t">span</span><span class="g">&gt;</span><span class="g">&lt;</span><span class="t">br</span><span class="g">&gt;</span><span class="g">&lt;</span><span class="t">span</span> <span class="a">class</span>=<span class="s">"prompt"</span><span class="g">&gt;</span></div>
<div class="ml" style="top:5984px">                                    <span class="a">class</span>=<span class="s">"command"</span><span class="g">&gt;</span>login<span class="g">&lt;/</span><span class="t">span</span><span class="g">&gt;</span><span class="g">&lt;</span><span class="t">br</span><span class="g">&gt;</span><span class="g">&lt;</span><span class="t">span</span></div>
<div class="ml" style="top:6000px">                                    <span class="swm">■</span><span class="swm">■</span><span class="g">&lt;/</span><span class="t">span</span><span class="g">&gt;</span><span class="g">&lt;</span><span class="t">br</span><span class="g">&gt;</span><span class="g">&lt;</span><span class="t">span</span> <span class="a">class</span>=<span class="s">"terminal-output"</span><span class="g">&gt;</span></div>
<div class="ml" style="top:6016px">                                    <span class="swm">■</span><span class="swm">■</span><span class="swm">■</span><span class="swm">■</span><span class="swm">■</span><span class="swm">■</span>...()■■■<span class="g">&lt;/</span><span class="t">span</span><span class="g">&gt;</span><span class="g">&lt;</span><span class="t">br</span><span class="g">&gt;</span><span class="g">&lt;</span><span class="t">span</span> <span class="a">class</span>=<span class="s">"x"</span><span class="g">&gt;</span></div>
<div class="ml" style="top:6032px">                                    <span class="a">class</span>=<span class="s">"string"</span><span class="g">&gt;</span><span class="s">"()  ()■■■■■■■■■■■■■"</span><span class="g">&lt;/</span><span class="t">span</span><span class="g">&gt;</span></div>
<div class="ml" style="top:6048px">                                    <span class="swm">■</span><span class="swm">■</span>()==<span class="swm">■</span><span class="swm">■</span><span class="swm">■</span><span class="swm">■</span><span class="swm">■</span><span class="swm">■</span><span class="swm">■</span>==<span class="g">&lt;/</span><span class="t">span</span><span class="g">&gt;</span><span class="g">&lt;</span><span class="t">br</span><span class="g">&gt;</span>&amp;gt;<span class="g">&lt;</span><span class="t">span</span></div>
<div class="ml" style="top:6064px">                        <span class="g">&lt;/</span><span class="t">div</span><span class="g">&gt;</span></div>
<div class="ml" style="top:6080px">                    <span class="g">&lt;/</span><span class="t">div</span><span class="g">&gt;</span></div>
<div class="ml" style="top:6112px">                    <span class="c">&lt;!-- curl --&gt;</span></div>
<div class="ml" style="top:6128px">                    <span class="g">&lt;</span><span class="t">div</span> <span class="a">class</span>=<span class="s">"tab-panel hidden"</span> <span class="a">data-panel</span>=<span class="s">"curl"</span><span class="g">&gt;</span></div>
<div class="ml" style="top:6144px">                        <span class="g">&lt;</span><span class="t">div</span> <span class="a">class</span>=<span class="s">"terminal"</span><span class="g">&gt;</span></div>
<div class="ml" style="top:6160px">                            <span class="g">&lt;</span><span class="t">div</span> <span class="a">class</span>=<span class="s">"terminal-header"</span><span class="g">&gt;</span></div>
<div class="ml" style="top:6176px">                                <span class="g">&lt;</span><span class="t">div</span> <span class="a">class</span>=<span class="s">"terminal-dot"</span> <span class="a">style</span>=<span class="s">"background: ■#ff5f56;"</span><span class="g">&gt;</span><span class="g">&lt;/</span><span class="t">div</span><span class="g">&gt;</span></div>
<div class="ml" style="top:6192px">                                <span class="g">&lt;</span><span class="t">div</span> <span class="a">class</span>=<span class="s">"terminal-dot"</span> <span class="a">style</span>=<span class="s">"background: ■#ffbd2e;"</span><span class="g">&gt;</span><span class="g">&lt;/</span><span class="t">div</span><span class="g">&gt;</span></div>
<div class="ml" style="top:6208px">                                <span class="g">&lt;</span><span class="t">div</span> <span class="a">class</span>=<span class="s">"terminal-dot"</span> <span class="a">style</span>=<span class="s">"background: ■#27c93f;"</span><span class="g">&gt;</span><span class="g">&lt;/</span><span class="t">div</span><span class="g">&gt;</span></div>
<div class="ml" style="top:6224px">                                <span class="g">&lt;</span><span class="t">span</span> <span class="a">style</span>=<span class="s">"color: ■#94a3b8; margin-left: 8px;"</span><span class="g">&gt;</span>bash<span class="g">&lt;/</span><span class="t">span</span><span class="g">&gt;</span></div>
<div class="ml" style="top:6240px">                            <span class="g">&lt;/</span><span class="t">div</span><span class="g">&gt;</span></div>
<div class="ml" style="top:6256px">                            <span class="c">&lt;!-- prettier-ignore --&gt;</span></div>
<div class="ml" style="top:6272px">                            <span class="g">&lt;</span><span class="t">div</span> <span class="a">class</span>=<span class="s">"terminal-body"</span><span class="g">&gt;</span><span class="g">&lt;</span><span class="t">span</span> <span class="a">class</span>=<span class="s">"prompt"</span><span class="g">&gt;</span>$<span class="g">&lt;/</span><span class="t">span</span><span class="g">&gt;</span> <span class="g">&lt;</span><span class="t">span</span></div>
<div class="ml" style="top:6288px">                                    <span class="a">class</span>=<span class="s">"string"</span><span class="g">&gt;</span>$BASE//api.aicodemirror.com/v1/chat<span class="g">&lt;/</span><span class="t">span</span><span class="g">&gt;</span></div>
<div class="ml" style="top:6304px">                                    <span class="a">class</span>=<span class="s">"variable"</span><span class="g">&gt;</span>-H<span class="g">&lt;/</span><span class="t">span</span><span class="g">&gt;</span> <span class="g">&lt;</span><span class="t">span</span> <span class="a">class</span>=<span class="s">"string"</span><span class="g">&gt;</span></div>
</div></div>
<div style="left:1154px;top:178px;width:28px;height:1580px;background:#1f1f1f;"></div>
<div style="left:1154px;top:178px;width:1px;height:1580px;background:#141414;"></div>
<div style="left:1154px;top:178px;width:28px;height:1px;background:#141414;"></div>
<div style="left:1155px;top:904px;width:27px;height:4px;background:#a0a0a0;"></div>
<span class="tx " style="left:1224.03px;top:85.00px;font-size:22px;line-height:29px;letter-spacing:-0.239px;color:#d2d2d2;-webkit-text-stroke:0.3px #d2d2d2;">CODEX</span>
<div style="left:1220px;top:120px;width:85px;height:2px;background:#0078d4;"></div>
<svg style="left:2318px;top:83px;" width="32" height="32" viewBox="2318 83 32 32" fill="none"><path d="M2323.2 94.5v-3.3a3 3 0 0 1 3-3h3.3M2338.5 88.2h3.3a3 3 0 0 1 3 3v3.3M2344.8 103.5v3.3a3 3 0 0 1-3 3h-3.3M2329.5 109.8h-3.3a3 3 0 0 1-3-3v-3.3" stroke="#cccccc" stroke-width="2.2" stroke-linecap="round"/></svg>
<svg style="left:2374px;top:87px;" width="24" height="24" viewBox="2374 87 24 24" fill="none"><path d="M2377.6 90.6l16.8 16.8M2394.4 90.6l-16.8 16.8" stroke="#cccccc" stroke-width="2.2"/></svg>
<svg style="left:2252px;top:150px;" width="30" height="30" viewBox="2252 150 30 30" fill="none"><path d="M2256.6 159.2a10.6 10.6 0 1 1-.9 7.2" stroke="#a3a3a3" stroke-width="2.3" stroke-linecap="round"/><path d="M2256 153.6v5.8h5.8" stroke="#a3a3a3" stroke-width="2.3" stroke-linecap="round" stroke-linejoin="round"/><path d="M2266.6 158.4v5.6l-3 3.4" stroke="#a3a3a3" stroke-width="2.3" stroke-linecap="round" stroke-linejoin="round"/></svg>
<svg style="left:2303px;top:149.5px;" width="30" height="30" viewBox="2303 149.5 30 30" fill="none"><path d="M2313.55 156.79A4.5 4.5 0 0 1 2322.45 156.79A4.5 4.5 0 0 1 2326.90 164.50A4.5 4.5 0 0 1 2322.45 172.21A4.5 4.5 0 0 1 2313.55 172.21A4.5 4.5 0 0 1 2309.10 164.50A4.5 4.5 0 0 1 2313.55 156.79Z" stroke="#a3a3a3" stroke-width="2.3" stroke-linejoin="round"/><circle cx="2318" cy="164.5" r="3.2" stroke="#a3a3a3" stroke-width="2.3"/></svg>
<svg style="left:2354px;top:148px;" width="32" height="32" viewBox="2354 148 32 32" fill="none"><path d="M2368.5 153h-5a4.2 4.2 0 0 0-4.2 4.2v13.4a4.2 4.2 0 0 0 4.2 4.2h13.4a4.2 4.2 0 0 0 4.2-4.2v-5" stroke="#a3a3a3" stroke-width="2.3" stroke-linecap="round"/><path d="M2376.8 153.6a2.6 2.6 0 0 1 3.7 3.7l-10.2 9.2-4.6 1.2 1.2-4.6z" stroke="#a3a3a3" stroke-width="2.3" stroke-linejoin="round"/></svg>
<svg style="left:1769.0px;top:804.8px" width="77" height="77" viewBox="0 0 24 24"><path fill="#3d3d3d" d="M22.2819 9.8211a5.9847 5.9847 0 0 0-.5157-4.9108 6.0462 6.0462 0 0 0-6.5098-2.9A6.0651 6.0651 0 0 0 4.9807 4.1818a5.9847 5.9847 0 0 0-3.9977 2.9 6.0462 6.0462 0 0 0 .7427 7.0966 5.98 5.98 0 0 0 .511 4.9107 6.051 6.051 0 0 0 6.5146 2.9001A5.9847 5.9847 0 0 0 13.2599 24a6.0557 6.0557 0 0 0 5.7718-4.2058 5.9894 5.9894 0 0 0 3.9977-2.9001 6.0557 6.0557 0 0 0-.7475-7.0729zm-9.022 12.6081a4.4755 4.4755 0 0 1-2.8764-1.0408l.1419-.0804 4.7783-2.7582a.7948.7948 0 0 0 .3927-.6813v-6.7369l2.02 1.1686a.071.071 0 0 1 .038.052v5.5826a4.504 4.504 0 0 1-4.4945 4.4944zm-9.6607-4.1254a4.4708 4.4708 0 0 1-.5346-3.0137l.142.0852 4.783 2.7582a.7712.7712 0 0 0 .7806 0l5.8428-3.3685v2.3324a.0804.0804 0 0 1-.0332.0615L9.74 19.9502a4.4992 4.4992 0 0 1-6.1408-1.6464zM2.3408 7.8956a4.485 4.485 0 0 1 2.3655-1.9728V11.6a.7664.7664 0 0 0 .3879.6765l5.8144 3.3543-2.0201 1.1685a.0757.0757 0 0 1-.071 0l-4.8303-2.7865A4.504 4.504 0 0 1 2.3408 7.872zm16.5963 3.8558L13.1038 8.364 15.1192 7.2a.0757.0757 0 0 1 .071 0l4.8303 2.7913a4.4944 4.4944 0 0 1-.6765 8.1042v-5.6772a.79.79 0 0 0-.407-.667zm2.0107-3.0231l-.142-.0852-4.7735-2.7818a.7759.7759 0 0 0-.7854 0L9.409 9.2297V6.8974a.0662.0662 0 0 1 .0284-.0615l4.8303-2.7866a4.4992 4.4992 0 0 1 6.6802 4.66zM8.3065 12.863l-2.02-1.1638a.0804.0804 0 0 1-.038-.0567V6.0742a4.4992 4.4992 0 0 1 7.3757-3.4537l-.142.0805L8.704 5.459a.7948.7948 0 0 0-.3927.6813zm1.0976-2.3654l2.602-1.4998 2.6069 1.4998v2.9994l-2.5974 1.4997-2.6067-1.4997Z"/></svg>
<svg style="left:1228px;top:1726px;" width="32" height="28" viewBox="1228 1726 32 28" fill="none"><path d="M1233.8 1744v-12.5h20.6v12.5" stroke="#9d9d9d" stroke-width="2" stroke-linejoin="round"/><rect x="1232" y="1744.2" width="24.2" height="4.2" rx="2" stroke="#9d9d9d" stroke-width="1.8"/></svg>
<span class="tx " style="left:1266.02px;top:1722.70px;font-size:26px;line-height:34px;letter-spacing:-0.296px;color:#9d9d9d;-webkit-text-stroke:0.3px #9d9d9d;">Local</span>
<svg style="left:1336px;top:1732px;" width="24" height="16" viewBox="1336 1732 24 16" fill="none"><path d="M1340.2 1736.6l7.7 7.6 7.7-7.6" stroke="#9d9d9d" stroke-width="1.9" stroke-linecap="round" stroke-linejoin="round"/></svg>
<svg style="left:1400px;top:1722px;" width="24" height="34" viewBox="1400 1722 24 34" fill="none"><rect x="1404.7" y="1729.5" width="14.6" height="12" rx="4.5" stroke="#9d9d9d" stroke-width="2"/><circle cx="1409.5" cy="1735.2" r="1.3" fill="#9d9d9d"/><circle cx="1414.6" cy="1735.2" r="1.3" fill="#9d9d9d"/><path d="M1412 1729.5v-2.2M1405.2 1752c0-4.8 3-6.8 6.8-6.8s6.8 2 6.8 6.8" stroke="#9d9d9d" stroke-width="2" stroke-linecap="round"/></svg>
<span class="tx " style="left:1435.10px;top:1722.70px;font-size:26px;line-height:34px;letter-spacing:-0.751px;color:#9d9d9d;-webkit-text-stroke:0.3px #9d9d9d;">Agent</span>
<svg style="left:1512px;top:1732px;" width="22" height="16" viewBox="1512 1732 22 16" fill="none"><path d="M1515.6 1736.6l7.7 7.6 7.7-7.6" stroke="#9d9d9d" stroke-width="1.9" stroke-linecap="round" stroke-linejoin="round"/></svg>
<div style="left:1216px;top:1507.5px;width:1184px;height:196.5px;box-sizing:border-box;border:2px solid #3c3c3c;border-radius:32px;background:#313131"></div>
<span class="tx " style="left:1241.99px;top:1537.00px;font-size:26.5px;line-height:34px;letter-spacing:1.048px;color:#d4d4d4;-webkit-text-stroke:0.25px #d4d4d4;">hi</span>
<div style="left:1234px;top:1630px;width:56px;height:56px;border-radius:28px;background:#3a3a3a"></div>
<svg style="left:1246px;top:1642px;" width="32" height="32" viewBox="1246 1642 32 32" fill="none"><path d="M1262 1644.2v28M1248 1658.2h28" stroke="#d0d0d0" stroke-width="2.3"/></svg>
<div style="left:1300px;top:1630px;width:56px;height:56px;border-radius:28px;background:#3a3a3a"></div>
<svg style="left:1312px;top:1642px;" width="32" height="32" viewBox="1312 1642 32 32" fill="none"><path d="M1334.6 1646l-13 24" stroke="#d0d0d0" stroke-width="2.4" stroke-linecap="round"/></svg>
<div style="left:1366px;top:1630px;width:216px;height:56px;border-radius:28px;background:#38414f"></div>
<svg style="left:1382px;top:1642px;" width="32" height="32" viewBox="1382 1642 32 32" fill="none"><path d="M1389.7 1660.4A8 8 0 1 1 1403.5 1653.2" stroke="#4daafc" stroke-width="2.1" stroke-linecap="round"/><path d="M1394.9 1653.8l2.5 14 3.3-3.9 3.6 4.4 2.5-2-3.6-4.4 5-1.5z" stroke="#4daafc" stroke-width="2" stroke-linejoin="round"/></svg>
<span class="tx " style="left:1421.15px;top:1643.20px;font-size:25px;line-height:32px;letter-spacing:0.260px;color:#4daafc;-webkit-text-stroke:0.4px #4daafc;">Auto context</span>
<div style="left:2326px;top:1630px;width:56px;height:56px;border-radius:28px;background:#cccccc"></div>
<svg style="left:2338px;top:1642px;" width="32" height="32" viewBox="2338 1642 32 32" fill="none"><path d="M2354 1670v-24.5M2343 1656.5l11-11 11 11" stroke="#222" stroke-width="2.3"/></svg>
<div style="left:1220px;top:1390px;width:1185px;height:343px;box-sizing:border-box;border:4px solid #fb5151;border-radius:2px"></div>
<div style="left:2431px;top:9px;width:1px;height:1749px;background:#313131;"></div>
<svg style="left:2420px;top:0px;" width="12" height="12" viewBox="0 0 12 12" fill="none"><path d="M3.2 0H12V8.8A8.8 8.8 0 0 0 3.2 0z" fill="#100a06"/><path d="M3.2 0.3A8.6 8.6 0 0 1 11.7 8.8" stroke="#7a7a7a" stroke-width="0.9"/></svg>
</div>
</body></html>
